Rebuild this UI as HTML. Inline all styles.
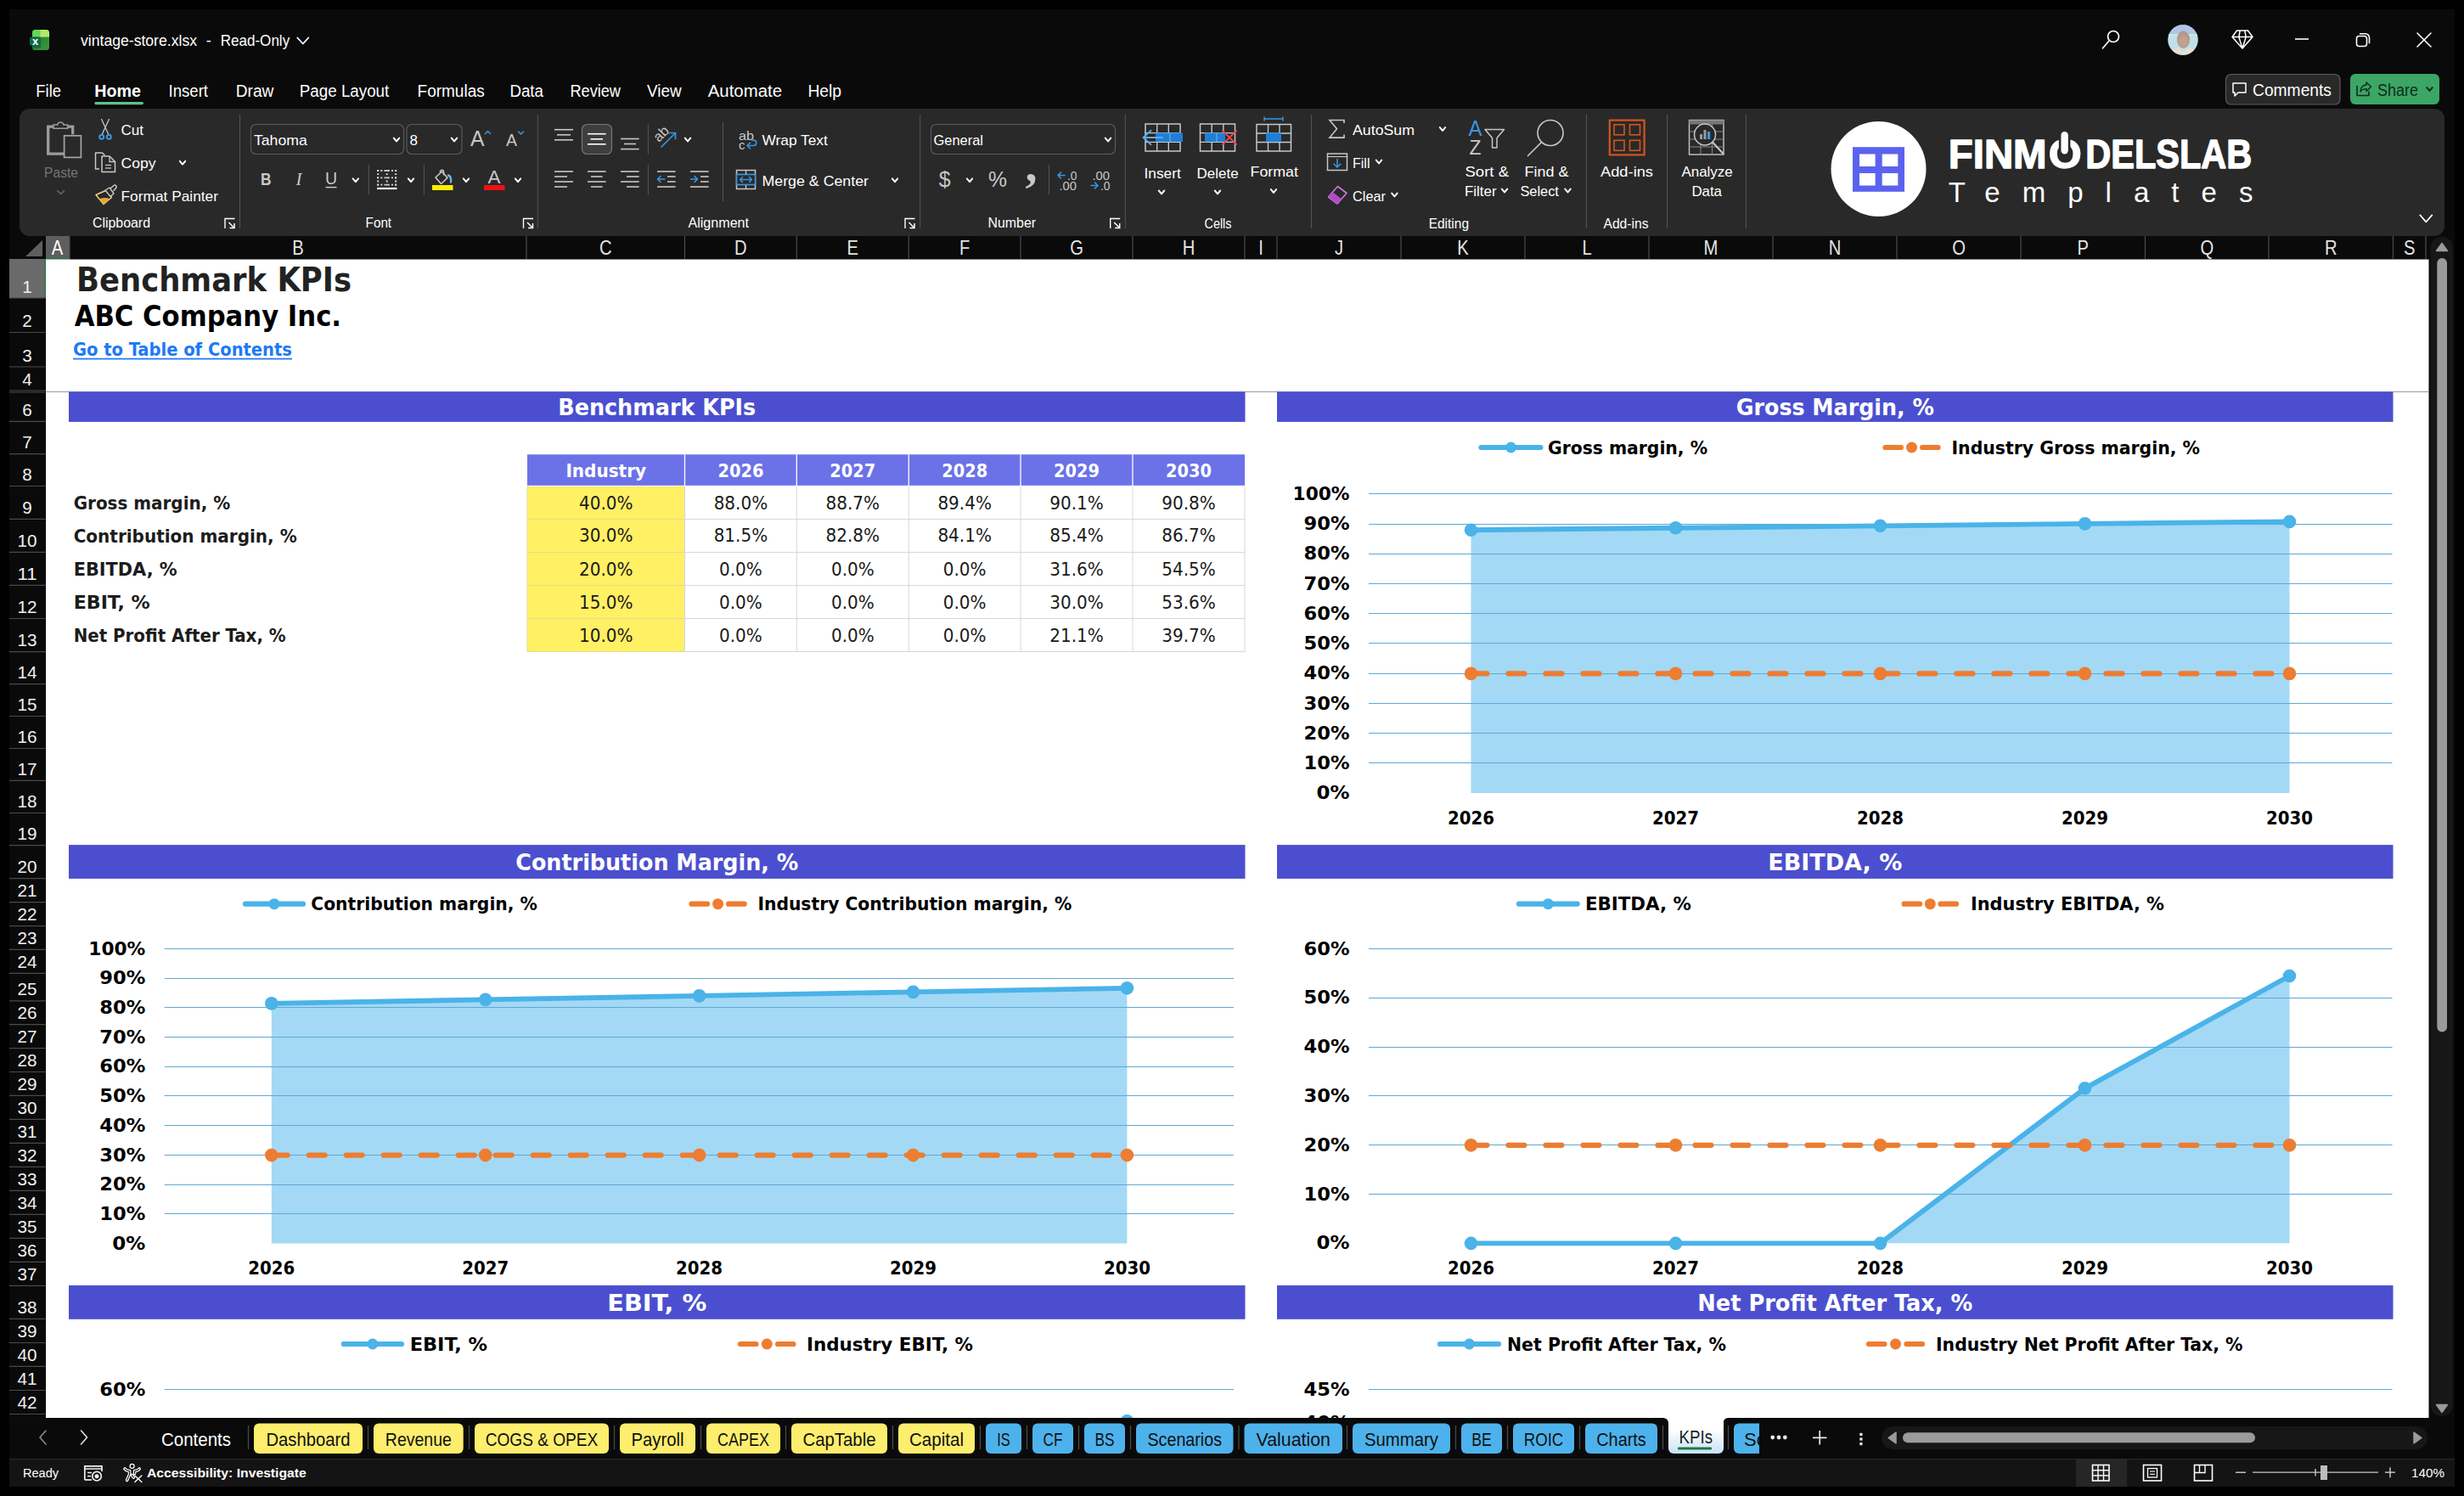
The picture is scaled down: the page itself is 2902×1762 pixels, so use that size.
<!DOCTYPE html>
<html lang="en"><head><meta charset="utf-8"><title>vintage-store.xlsx - Excel</title>
<style>
html,body{margin:0;padding:0;background:#000;}
body{width:2902px;height:1762px;overflow:hidden;}
svg{display:block;font-family:"Liberation Sans",sans-serif;}
svg text{white-space:pre;}
.sh{font-family:"DejaVu Sans Condensed","DejaVu Sans","Liberation Sans",sans-serif;}
</style></head><body>
<svg width="2902" height="1762" viewBox="0 0 2902 1762">
<rect x="0" y="0" width="2902" height="1762" fill="#000" />
<rect x="11" y="11" width="2880" height="1740" fill="#0a0a0a" />
<g id="titlebar" >
<defs><linearGradient id="xg" x1="0" y1="0" x2="1" y2="1"><stop offset="0" stop-color="#257627"/><stop offset="1" stop-color="#38993d"/></linearGradient><clipPath id="xc"><rect x="38" y="35" width="20" height="24.2" rx="3.6"/></clipPath></defs>
<g clip-path="url(#xc)">
<rect x="38" y="35" width="20" height="24.2" fill="url(#xg)" />
<rect x="38" y="35" width="9.2" height="8.6" fill="#62d75a" />
<rect x="47.2" y="35" width="10.8" height="8.6" fill="#b4e86b" />
</g>
<path d="M38 43.6 h7.5 a2.5 2.5 0 0 1 2.5 2.5 v8 a2.5 2.5 0 0 1 -2.5 2.5 h-5 l-5.5 -4 v-6.5 a2.5 2.5 0 0 1 2.5 -2.5 z" fill="#106a45" />
<text x="41.6" y="52.8" font-size="13" fill="#fff" font-weight="bold" text-anchor="middle" >x</text>
<text x="95" y="53.6" font-size="18.5" fill="#fff" textLength="137" lengthAdjust="spacingAndGlyphs" >vintage-store.xlsx</text>
<text x="242.7" y="53.6" font-size="18.5" fill="#fff" >-</text>
<text x="259.7" y="53.6" font-size="18.5" fill="#fff" textLength="81.5" lengthAdjust="spacingAndGlyphs" >Read-Only</text>
<path d="M350.3 44.5 L356.8 51.5 L363.3 44.5" fill="none" stroke="#fff" stroke-width="1.8" stroke-linecap="round" stroke-linejoin="round"/>
<circle cx="2489" cy="43" r="6.5" fill="none" stroke="#fff" stroke-width="1.7" />
<line x1="2484.3" y1="47.8" x2="2476.5" y2="56.8" stroke="#fff" stroke-width="1.7" stroke-linecap="round"/>
<circle cx="2571" cy="47" r="17.8" fill="#bfe0e6" />
<clipPath id="avc"><circle cx="2571" cy="47" r="17.8"/></clipPath>
<g clip-path="url(#avc)">
<rect x="2552" y="28" width="38" height="12.5" fill="#aec6e6" />
<rect x="2552" y="40" width="38" height="2.5" fill="#cfe3ea" />
<ellipse cx="2571.5" cy="46.5" rx="7.6" ry="10.2" fill="#b7988a"/>
<ellipse cx="2571.5" cy="49" rx="5.5" ry="6.5" fill="#c0a193"/>
<path d="M2556 66 q2 -9 10 -9.5 l5.5 5 l5.5 -5 q8 0.5 10 9.5 z" fill="#e9dfd2" />
</g>
<path d="M2634.5 36 h13 l5.5 7.5 l-12 13.5 l-12 -13.5 z M2629 43.5 h24 M2638.2 36 l-1.4 7.5 l4.2 13.5 l4.2 -13.5 l-1.4 -7.5" fill="none" stroke="#fff" stroke-width="1.5" stroke-linejoin="round"/>
<line x1="2703" y1="46" x2="2719" y2="46" stroke="#fff" stroke-width="1.6" />
<rect x="2775.5" y="42.5" width="12" height="12" fill="none" rx="3" stroke="#fff" stroke-width="1.6" />
<path d="M2779 39.8 h7 a4.5 4.5 0 0 1 4.5 4.5 v7" fill="none" stroke="#fff" stroke-width="1.6" />
<path d="M2847 39 L2863 55 M2863 39 L2847 55" fill="none" stroke="#fff" stroke-width="1.6" stroke-linecap="round"/>
</g>
<g id="menubar" >
<text x="42.3" y="113.8" font-size="20" fill="#fff" textLength="29.7" lengthAdjust="spacingAndGlyphs" >File</text>
<text x="111.3" y="113.8" font-size="20" fill="#fff" font-weight="bold" textLength="54.7" lengthAdjust="spacingAndGlyphs" >Home</text>
<text x="198.6" y="113.8" font-size="20" fill="#fff" textLength="46.4" lengthAdjust="spacingAndGlyphs" >Insert</text>
<text x="277.7" y="113.8" font-size="20" fill="#fff" textLength="44.7" lengthAdjust="spacingAndGlyphs" >Draw</text>
<text x="352.8" y="113.8" font-size="20" fill="#fff" textLength="105.5" lengthAdjust="spacingAndGlyphs" >Page Layout</text>
<text x="491.6" y="113.8" font-size="20" fill="#fff" textLength="79.1" lengthAdjust="spacingAndGlyphs" >Formulas</text>
<text x="600.4" y="113.8" font-size="20" fill="#fff" textLength="39.6" lengthAdjust="spacingAndGlyphs" >Data</text>
<text x="671.4" y="113.8" font-size="20" fill="#fff" textLength="59.6" lengthAdjust="spacingAndGlyphs" >Review</text>
<text x="762" y="113.8" font-size="20" fill="#fff" textLength="40.5" lengthAdjust="spacingAndGlyphs" >View</text>
<text x="833.7" y="113.8" font-size="20" fill="#fff" textLength="87.3" lengthAdjust="spacingAndGlyphs" >Automate</text>
<text x="951.4" y="113.8" font-size="20" fill="#fff" textLength="39.6" lengthAdjust="spacingAndGlyphs" >Help</text>
<rect x="111.3" y="120" width="57.7" height="3.2" fill="#5fc08f" rx="1.6" />
<rect x="2621.5" y="87.5" width="134.5" height="35.5" fill="#292929" rx="6" stroke="#5a5a5a" stroke-width="1.2" />
<path d="M2630 98 h15 v11 h-9 l-4 4 v-4 h-2 z" fill="none" stroke="#fff" stroke-width="1.5" stroke-linejoin="round"/>
<text x="2653" y="112.5" font-size="19.5" fill="#fff" textLength="93" lengthAdjust="spacingAndGlyphs" >Comments</text>
<rect x="2768" y="87" width="105" height="36" fill="#3ba666" rx="6" />
<path d="M2776 101.5 v11 h14 v-4.5" fill="none" stroke="#0b2e19" stroke-width="1.6" stroke-linejoin="round" stroke-linecap="round"/>
<path d="M2780 108 c0 -5.5 3.5 -8 7 -8 v-3 l5.5 5.3 l-5.5 5.3 v-3 c-3 0 -5.2 0.6 -7 3.4 z" fill="none" stroke="#0b2e19" stroke-width="1.4" stroke-linejoin="round"/>
<text x="2800" y="112.5" font-size="19.5" fill="#0b2e19" textLength="48" lengthAdjust="spacingAndGlyphs" >Share</text>
<path d="M2858.3 103.1 L2861.5 106.9 L2864.7 103.1" fill="none" stroke="#0b2e19" stroke-width="2" stroke-linecap="round" stroke-linejoin="round"/>
</g>
<g id="ribbon" >
<rect x="23" y="128" width="2856" height="150" fill="#292929" rx="12" />
<path d="M63 149.2 h-6.3 v32 h18.5" fill="none" stroke="#9c9c9c" stroke-width="3.3" stroke-linejoin="miter"/>
<path d="M79.5 149.2 h6.2 v9" fill="none" stroke="#9c9c9c" stroke-width="3.3" />
<path d="M63 151.3 v-4.3 h4.6 a3.8 3.8 0 0 1 7.4 0 h4.6 v4.3 z" fill="#292929" stroke="#9c9c9c" stroke-width="1.5" />
<rect x="75.6" y="159.8" width="19.8" height="25.6" fill="#292929" stroke="#a4a4a4" stroke-width="1.7" />
<text x="52" y="209" font-size="17" fill="#757575" textLength="40" lengthAdjust="spacingAndGlyphs" >Paste</text>
<path d="M67.6 224.5 L71.6 228.5 L75.6 224.5" fill="none" stroke="#666" stroke-width="1.6" stroke-linecap="round" stroke-linejoin="round"/>
<path d="M119.6 140.5 L127.8 158.3 M128.4 140.5 L120.2 158.3" fill="none" stroke="#c8c8c8" stroke-width="1.3" stroke-linecap="round"/>
<circle cx="119.7" cy="161.2" r="2.5" fill="none" stroke="#3a96dd" stroke-width="2" />
<circle cx="128.3" cy="161.2" r="2.5" fill="none" stroke="#3a96dd" stroke-width="2" />
<text x="142.5" y="158.5" font-size="16.5" fill="#fff" textLength="26.5" lengthAdjust="spacingAndGlyphs" >Cut</text>
<path d="M117 199 h-4.5 v-19 h8 l3 3" fill="none" stroke="#c8c8c8" stroke-width="1.5" stroke-linejoin="round"/>
<path d="M120 184 h9 l6.5 6.5 v12 h-15.5 z" fill="none" stroke="#c8c8c8" stroke-width="1.5" stroke-linejoin="round"/>
<path d="M129 184 v6.5 h6.5" fill="none" stroke="#c8c8c8" stroke-width="1.3" />
<line x1="124" y1="194.5" x2="131" y2="194.5" stroke="#c8c8c8" stroke-width="1.3" />
<line x1="124" y1="198" x2="131" y2="198" stroke="#c8c8c8" stroke-width="1.3" />
<text x="142.5" y="198" font-size="16.5" fill="#fff" textLength="41" lengthAdjust="spacingAndGlyphs" >Copy</text>
<path d="M211.8 189.8 L215 193.6 L218.2 189.8" fill="none" stroke="#fff" stroke-width="2" stroke-linecap="round" stroke-linejoin="round"/>
<path d="M113 229.5 l12.5 -5.5 l6 8.5 l-9.5 8 z" fill="#292929" stroke="#f3d58d" stroke-width="1.4" stroke-linejoin="round"/>
<path d="M117.3 234.3 q6 -2.5 12.2 0 l-7.3 6 z" fill="#eda52c" />
<path d="M124 224 l5 -3 l5 7 l-4 3.5 z" fill="#292929" stroke="#c8c8c8" stroke-width="1.4" stroke-linejoin="round"/>
<path d="M130 222 l4 -3.5 a2 2 0 0 1 3 2.5 l-3.5 4" fill="none" stroke="#c8c8c8" stroke-width="1.5" />
<text x="142.5" y="236.5" font-size="16.5" fill="#fff" textLength="114.5" lengthAdjust="spacingAndGlyphs" >Format Painter</text>
<text x="109" y="268.4" font-size="16" fill="#fff" textLength="68" lengthAdjust="spacingAndGlyphs" >Clipboard</text>
<path d="M265 269.0 V257.5 H276.5" fill="none" stroke="#fff" stroke-width="1.4" />
<path d="M269.5 262.0 L276 268.5 M276 263.0 V268.5 H270.5" fill="none" stroke="#fff" stroke-width="1.5" />
<line x1="282.5" y1="135" x2="282.5" y2="269" stroke="#555" stroke-width="1" />
<rect x="295.5" y="146.5" width="180" height="35" fill="#292929" rx="6" stroke="#5a5a5a" stroke-width="1.2" />
<text x="299" y="171" font-size="17" fill="#fff" textLength="62.7" lengthAdjust="spacingAndGlyphs" >Tahoma</text>
<path d="M463.8 162.6 L467 166.4 L470.2 162.6" fill="none" stroke="#fff" stroke-width="2" stroke-linecap="round" stroke-linejoin="round"/>
<rect x="479" y="146.5" width="65" height="35" fill="#292929" rx="6" stroke="#5a5a5a" stroke-width="1.2" />
<text x="482.5" y="171" font-size="17" fill="#fff" >8</text>
<path d="M531.8 162.6 L535 166.4 L538.2 162.6" fill="none" stroke="#fff" stroke-width="2" stroke-linecap="round" stroke-linejoin="round"/>
<text x="554" y="171.5" font-size="26" fill="#c8c8c8" textLength="16.5" lengthAdjust="spacingAndGlyphs" >A</text>
<path d="M571.5 157.5 l3 -3 l3 3" fill="none" stroke="#3a96dd" stroke-width="1.6" stroke-linecap="round" stroke-linejoin="round"/>
<text x="596" y="171.5" font-size="21" fill="#c8c8c8" textLength="13" lengthAdjust="spacingAndGlyphs" >A</text>
<path d="M610.5 155 l3 3 l3 -3" fill="none" stroke="#3a96dd" stroke-width="1.6" stroke-linecap="round" stroke-linejoin="round"/>
<text x="313.3" y="218" font-size="21" fill="#c8c8c8" font-weight="bold" text-anchor="middle" textLength="12.5" lengthAdjust="spacingAndGlyphs" >B</text>
<text x="352" y="218" font-size="21" fill="#c8c8c8" text-anchor="middle" font-style="italic" font-family="Liberation Serif, serif">I</text>
<text x="390" y="216.5" font-size="19.5" fill="#c8c8c8" text-anchor="middle" >U</text>
<line x1="383.5" y1="220.6" x2="396.5" y2="220.6" stroke="#c8c8c8" stroke-width="1.5" />
<path d="M415.6 210.4 L418.8 214.2 L422 210.4" fill="none" stroke="#fff" stroke-width="2" stroke-linecap="round" stroke-linejoin="round"/>
<line x1="434.4" y1="194" x2="434.4" y2="229.5" stroke="#555" stroke-width="1" />
<line x1="444.2" y1="201" x2="467.2" y2="201" stroke="#e4e4e4" stroke-width="1.9" stroke-dasharray="1.9 2.3"/>
<line x1="444.2" y1="209.4" x2="467.2" y2="209.4" stroke="#e4e4e4" stroke-width="1.9" stroke-dasharray="1.9 2.3"/>
<line x1="444.2" y1="217.6" x2="467.2" y2="217.6" stroke="#e4e4e4" stroke-width="1.9" stroke-dasharray="1.9 2.3"/>
<line x1="445.2" y1="200" x2="445.2" y2="218.6" stroke="#e4e4e4" stroke-width="1.9" stroke-dasharray="1.9 2.3"/>
<line x1="455.7" y1="200" x2="455.7" y2="218.6" stroke="#e4e4e4" stroke-width="1.9" stroke-dasharray="1.9 2.3"/>
<line x1="466.2" y1="200" x2="466.2" y2="218.6" stroke="#e4e4e4" stroke-width="1.9" stroke-dasharray="1.9 2.3"/>
<line x1="444" y1="222" x2="467.5" y2="222" stroke="#fff" stroke-width="2.2" />
<path d="M480.8 210.4 L484 214.2 L487.2 210.4" fill="none" stroke="#fff" stroke-width="2" stroke-linecap="round" stroke-linejoin="round"/>
<line x1="499.4" y1="194" x2="499.4" y2="229.5" stroke="#555" stroke-width="1" />
<path d="M513 209 l7.5 -7 l6.5 7.5 l-7.5 7 z" fill="none" stroke="#c8c8c8" stroke-width="1.6" stroke-linejoin="round"/>
<path d="M518.5 203.8 v-2.6 l2.2 -1.2 l1.8 1.2 v5" fill="none" stroke="#c8c8c8" stroke-width="1.4" stroke-linejoin="round"/>
<path d="M528 206.5 c2.6 0.8 3.4 4 3 8" fill="none" stroke="#6db3ee" stroke-width="2.4" stroke-linecap="round"/>
<rect x="509" y="218" width="24.5" height="6" fill="#ffee00" />
<path d="M545.8 210.4 L549 214.2 L552.2 210.4" fill="none" stroke="#fff" stroke-width="2" stroke-linecap="round" stroke-linejoin="round"/>
<text x="582" y="216" font-size="22" fill="#c8c8c8" text-anchor="middle" textLength="15" lengthAdjust="spacingAndGlyphs" >A</text>
<rect x="570" y="218" width="24.5" height="6" fill="#ee1111" />
<path d="M606.8 210.4 L610 214.2 L613.2 210.4" fill="none" stroke="#fff" stroke-width="2" stroke-linecap="round" stroke-linejoin="round"/>
<text x="430.6" y="268.4" font-size="16" fill="#fff" textLength="30.5" lengthAdjust="spacingAndGlyphs" >Font</text>
<path d="M616.5 269.0 V257.5 H628.0" fill="none" stroke="#fff" stroke-width="1.4" />
<path d="M621.0 262.0 L627.5 268.5 M627.5 263.0 V268.5 H622.0" fill="none" stroke="#fff" stroke-width="1.5" />
<line x1="633.3" y1="135" x2="633.3" y2="269" stroke="#555" stroke-width="1" />
<line x1="653" y1="152.7" x2="675" y2="152.7" stroke="#c8c8c8" stroke-width="1.6" />
<line x1="653" y1="164.8" x2="675" y2="164.8" stroke="#c8c8c8" stroke-width="1.6" />
<line x1="656" y1="158.8" x2="672" y2="158.8" stroke="#c8c8c8" stroke-width="1.6" />
<rect x="685.5" y="146.5" width="35" height="35" fill="#3e3e3e" rx="6" stroke="#787878" stroke-width="1.2" />
<line x1="692" y1="157.7" x2="713.6" y2="157.7" stroke="#fff" stroke-width="1.6" />
<line x1="692" y1="169.8" x2="713.6" y2="169.8" stroke="#fff" stroke-width="1.6" />
<line x1="695.5" y1="163.8" x2="710" y2="163.8" stroke="#fff" stroke-width="1.6" />
<line x1="731" y1="163.5" x2="752.6" y2="163.5" stroke="#c8c8c8" stroke-width="1.6" />
<line x1="731" y1="175.6" x2="752.6" y2="175.6" stroke="#c8c8c8" stroke-width="1.6" />
<line x1="735" y1="169.5" x2="749" y2="169.5" stroke="#c8c8c8" stroke-width="1.6" />
<line x1="763.4" y1="146" x2="763.4" y2="181.6" stroke="#555" stroke-width="1" />
<text x="0" y="0" font-size="16.5" fill="#c8c8c8" transform="translate(776,168) rotate(-45)">ab</text>
<path d="M779 173 L795 157 M788.5 156.5 h7 v7" fill="none" stroke="#3a96dd" stroke-width="1.7" stroke-linecap="round" stroke-linejoin="round"/>
<path d="M806.8 162.6 L810 166.4 L813.2 162.6" fill="none" stroke="#fff" stroke-width="2" stroke-linecap="round" stroke-linejoin="round"/>
<line x1="851.5" y1="144" x2="851.5" y2="237" stroke="#555" stroke-width="1" />
<text x="870" y="164.5" font-size="15" fill="#c8c8c8" textLength="18" lengthAdjust="spacingAndGlyphs" >ab</text>
<text x="870" y="176" font-size="15" fill="#c8c8c8" >c</text>
<path d="M880 171.5 h7.5 a3.2 3.2 0 0 0 0 -6.4 h-1.5 M883.5 168 l-3.5 3.5 l3.5 3.5" fill="none" stroke="#3a96dd" stroke-width="1.6" stroke-linecap="round" stroke-linejoin="round"/>
<text x="897.5" y="171" font-size="17" fill="#fff" textLength="77.3" lengthAdjust="spacingAndGlyphs" >Wrap Text</text>
<line x1="653" y1="202" x2="675" y2="202" stroke="#c8c8c8" stroke-width="1.6" />
<line x1="653" y1="214" x2="675" y2="214" stroke="#c8c8c8" stroke-width="1.6" />
<line x1="653" y1="208" x2="668" y2="208" stroke="#c8c8c8" stroke-width="1.6" />
<line x1="653" y1="220" x2="668" y2="220" stroke="#c8c8c8" stroke-width="1.6" />
<line x1="692" y1="202" x2="713.6" y2="202" stroke="#c8c8c8" stroke-width="1.6" />
<line x1="692" y1="214" x2="713.6" y2="214" stroke="#c8c8c8" stroke-width="1.6" />
<line x1="696" y1="208" x2="709.6" y2="208" stroke="#c8c8c8" stroke-width="1.6" />
<line x1="696" y1="220" x2="709.6" y2="220" stroke="#c8c8c8" stroke-width="1.6" />
<line x1="731" y1="202" x2="752.6" y2="202" stroke="#c8c8c8" stroke-width="1.6" />
<line x1="731" y1="214" x2="752.6" y2="214" stroke="#c8c8c8" stroke-width="1.6" />
<line x1="738" y1="208" x2="752.6" y2="208" stroke="#c8c8c8" stroke-width="1.6" />
<line x1="738" y1="220" x2="752.6" y2="220" stroke="#c8c8c8" stroke-width="1.6" />
<line x1="763.4" y1="194" x2="763.4" y2="229.5" stroke="#555" stroke-width="1" />
<line x1="774" y1="202" x2="795.6" y2="202" stroke="#c8c8c8" stroke-width="1.6" />
<line x1="774" y1="220" x2="795.6" y2="220" stroke="#c8c8c8" stroke-width="1.6" />
<line x1="786" y1="208" x2="795.6" y2="208" stroke="#c8c8c8" stroke-width="1.6" />
<line x1="786" y1="214" x2="795.6" y2="214" stroke="#c8c8c8" stroke-width="1.6" />
<path d="M783 211 h-8 M778 207.5 l-3.5 3.5 l3.5 3.5" fill="none" stroke="#3a96dd" stroke-width="1.6" stroke-linecap="round" stroke-linejoin="round"/>
<line x1="813" y1="202" x2="834.6" y2="202" stroke="#c8c8c8" stroke-width="1.6" />
<line x1="813" y1="220" x2="834.6" y2="220" stroke="#c8c8c8" stroke-width="1.6" />
<line x1="825" y1="208" x2="834.6" y2="208" stroke="#c8c8c8" stroke-width="1.6" />
<line x1="825" y1="214" x2="834.6" y2="214" stroke="#c8c8c8" stroke-width="1.6" />
<path d="M813.5 211 h8 M818 207.5 l3.5 3.5 l-3.5 3.5" fill="none" stroke="#3a96dd" stroke-width="1.6" stroke-linecap="round" stroke-linejoin="round"/>
<rect x="867.5" y="200.5" width="22" height="22" fill="none" stroke="#c8c8c8" stroke-width="1.5" />
<rect x="867.5" y="205.5" width="22" height="12" fill="#292929" stroke="#3a96dd" stroke-width="1.7" />
<line x1="878.5" y1="200.5" x2="878.5" y2="205" stroke="#c8c8c8" stroke-width="1.4" />
<line x1="878.5" y1="218" x2="878.5" y2="222.5" stroke="#c8c8c8" stroke-width="1.4" />
<path d="M871.5 211.5 h14 M874.5 208.5 l-3 3 l3 3 M882.5 208.5 l3 3 l-3 3" fill="none" stroke="#3a96dd" stroke-width="1.5" stroke-linecap="round" stroke-linejoin="round"/>
<text x="897.5" y="218.6" font-size="17" fill="#fff" textLength="125.5" lengthAdjust="spacingAndGlyphs" >Merge &amp; Center</text>
<path d="M1050.8 210.4 L1054 214.2 L1057.2 210.4" fill="none" stroke="#fff" stroke-width="2" stroke-linecap="round" stroke-linejoin="round"/>
<text x="810.5" y="268.4" font-size="16" fill="#fff" textLength="71.5" lengthAdjust="spacingAndGlyphs" >Alignment</text>
<path d="M1066 269.0 V257.5 H1077.5" fill="none" stroke="#fff" stroke-width="1.4" />
<path d="M1070.5 262.0 L1077 268.5 M1077 263.0 V268.5 H1071.5" fill="none" stroke="#fff" stroke-width="1.5" />
<line x1="1083.7" y1="135" x2="1083.7" y2="269" stroke="#555" stroke-width="1" />
<rect x="1096.5" y="146.5" width="217" height="35" fill="#292929" rx="6" stroke="#5a5a5a" stroke-width="1.2" />
<text x="1099.5" y="171" font-size="17" fill="#fff" textLength="58.5" lengthAdjust="spacingAndGlyphs" >General</text>
<path d="M1301.8 162.6 L1305 166.4 L1308.2 162.6" fill="none" stroke="#fff" stroke-width="2" stroke-linecap="round" stroke-linejoin="round"/>
<text x="1112.7" y="220" font-size="25" fill="#c8c8c8" text-anchor="middle" >$</text>
<path d="M1138.8 210.4 L1142 214.2 L1145.2 210.4" fill="none" stroke="#fff" stroke-width="2" stroke-linecap="round" stroke-linejoin="round"/>
<text x="1175" y="220" font-size="25" fill="#c8c8c8" text-anchor="middle" textLength="22" lengthAdjust="spacingAndGlyphs" >%</text>
<text x="1214.6" y="212.5" font-size="56" fill="#c8c8c8" font-weight="bold" text-anchor="middle" font-family="Liberation Serif, serif">,</text>
<line x1="1235.5" y1="194" x2="1235.5" y2="229.5" stroke="#555" stroke-width="1" />
<text x="1257" y="211.5" font-size="14.5" fill="#c8c8c8" textLength="11.5" lengthAdjust="spacingAndGlyphs" >.0</text>
<text x="1247.5" y="223.5" font-size="14.5" fill="#c8c8c8" textLength="20.5" lengthAdjust="spacingAndGlyphs" >.00</text>
<path d="M1254 206.5 h-8 M1249.5 203 l-3.5 3.5 l3.5 3.5" fill="none" stroke="#3a96dd" stroke-width="1.6" stroke-linecap="round" stroke-linejoin="round"/>
<text x="1286.5" y="211.5" font-size="14.5" fill="#c8c8c8" textLength="20.5" lengthAdjust="spacingAndGlyphs" >.00</text>
<text x="1296" y="223.5" font-size="14.5" fill="#c8c8c8" textLength="11.5" lengthAdjust="spacingAndGlyphs" >.0</text>
<path d="M1285 218.5 h8 M1289.5 215 l3.5 3.5 l-3.5 3.5" fill="none" stroke="#3a96dd" stroke-width="1.6" stroke-linecap="round" stroke-linejoin="round"/>
<text x="1163.5" y="268.4" font-size="16" fill="#fff" textLength="56.5" lengthAdjust="spacingAndGlyphs" >Number</text>
<path d="M1307.7 269.0 V257.5 H1319.2" fill="none" stroke="#fff" stroke-width="1.4" />
<path d="M1312.2 262.0 L1318.7 268.5 M1318.7 263.0 V268.5 H1313.2" fill="none" stroke="#fff" stroke-width="1.5" />
<line x1="1325.3" y1="135" x2="1325.3" y2="269" stroke="#555" stroke-width="1" />
<rect x="1349" y="146" width="41" height="32" fill="none" stroke="#c8c8c8" stroke-width="1.5" />
<line x1="1362.67" y1="146" x2="1362.67" y2="178" stroke="#c8c8c8" stroke-width="1.4" />
<line x1="1376.33" y1="146" x2="1376.33" y2="178" stroke="#c8c8c8" stroke-width="1.4" />
<line x1="1349" y1="156.667" x2="1390" y2="156.667" stroke="#c8c8c8" stroke-width="1.4" />
<line x1="1349" y1="167.333" x2="1390" y2="167.333" stroke="#c8c8c8" stroke-width="1.4" />
<rect x="1361" y="156.5" width="32" height="10.5" fill="#1f7fd6" />
<line x1="1378" y1="156.5" x2="1378" y2="167" stroke="#62aef0" stroke-width="1.2" />
<path d="M1369 162 h-22.5 M1355.5 153.8 l-9 8.2 l9 8.2" fill="none" stroke="#5fa9e6" stroke-width="1.9" stroke-linecap="round" stroke-linejoin="round"/>
<text x="1347.5" y="209.8" font-size="17" fill="#fff" textLength="43.3" lengthAdjust="spacingAndGlyphs" >Insert</text>
<path d="M1364.8 224.5 L1368 228.3 L1371.2 224.5" fill="none" stroke="#fff" stroke-width="2" stroke-linecap="round" stroke-linejoin="round"/>
<rect x="1413.5" y="146" width="41" height="32" fill="none" stroke="#c8c8c8" stroke-width="1.5" />
<line x1="1427.17" y1="146" x2="1427.17" y2="178" stroke="#c8c8c8" stroke-width="1.4" />
<line x1="1440.83" y1="146" x2="1440.83" y2="178" stroke="#c8c8c8" stroke-width="1.4" />
<line x1="1413.5" y1="156.667" x2="1454.5" y2="156.667" stroke="#c8c8c8" stroke-width="1.4" />
<line x1="1413.5" y1="167.333" x2="1454.5" y2="167.333" stroke="#c8c8c8" stroke-width="1.4" />
<rect x="1419" y="156.5" width="24" height="10.5" fill="#1f7fd6" />
<line x1="1433" y1="156.5" x2="1433" y2="167" stroke="#62aef0" stroke-width="1.2" />
<path d="M1440 154 l16 16 M1456 154 l-16 16" fill="none" stroke="#e5484d" stroke-width="1.9" stroke-linecap="round"/>
<text x="1409.6" y="209.8" font-size="17" fill="#fff" textLength="49" lengthAdjust="spacingAndGlyphs" >Delete</text>
<path d="M1430.8 224.5 L1434 228.3 L1437.2 224.5" fill="none" stroke="#fff" stroke-width="2" stroke-linecap="round" stroke-linejoin="round"/>
<rect x="1480" y="146.5" width="40.5" height="31.5" fill="none" stroke="#c8c8c8" stroke-width="1.5" />
<line x1="1493.5" y1="146.5" x2="1493.5" y2="178" stroke="#c8c8c8" stroke-width="1.4" />
<line x1="1507" y1="146.5" x2="1507" y2="178" stroke="#c8c8c8" stroke-width="1.4" />
<line x1="1480" y1="157" x2="1520.5" y2="157" stroke="#c8c8c8" stroke-width="1.4" />
<line x1="1480" y1="167.5" x2="1520.5" y2="167.5" stroke="#c8c8c8" stroke-width="1.4" />
<rect x="1491" y="156.5" width="18" height="10.5" fill="#1f7fd6" />
<path d="M1489 140 h22 M1489 137.5 v5 M1511 137.5 v5" fill="none" stroke="#3a96dd" stroke-width="1.5" />
<text x="1472.5" y="207.5" font-size="17" fill="#fff" textLength="56.5" lengthAdjust="spacingAndGlyphs" >Format</text>
<path d="M1496.8 223.1 L1500 226.9 L1503.2 223.1" fill="none" stroke="#fff" stroke-width="2" stroke-linecap="round" stroke-linejoin="round"/>
<text x="1418.5" y="269" font-size="16" fill="#fff" textLength="32" lengthAdjust="spacingAndGlyphs" >Cells</text>
<line x1="1544.4" y1="135" x2="1544.4" y2="269" stroke="#555" stroke-width="1" />
<path d="M1583 145 v-3.5 h-17 l8.5 10.3 l-8.5 10.3 h17 v-3.5" fill="none" stroke="#c8c8c8" stroke-width="1.6" stroke-linejoin="miter"/>
<text x="1593" y="158.5" font-size="17" fill="#fff" textLength="73" lengthAdjust="spacingAndGlyphs" >AutoSum</text>
<path d="M1695.8 150.1 L1699 153.9 L1702.2 150.1" fill="none" stroke="#fff" stroke-width="2" stroke-linecap="round" stroke-linejoin="round"/>
<rect x="1563.5" y="181" width="23" height="19.5" fill="none" stroke="#c8c8c8" stroke-width="1.5" />
<line x1="1563.5" y1="184.5" x2="1586.5" y2="184.5" stroke="#c8c8c8" stroke-width="1.2" />
<path d="M1575 187.5 v9 M1571 193 l4 4 l4 -4" fill="none" stroke="#3a96dd" stroke-width="1.6" stroke-linecap="round" stroke-linejoin="round"/>
<text x="1593" y="197.5" font-size="17" fill="#fff" textLength="20.5" lengthAdjust="spacingAndGlyphs" >Fill</text>
<path d="M1620.8 188.6 L1624 192.4 L1627.2 188.6" fill="none" stroke="#fff" stroke-width="2" stroke-linecap="round" stroke-linejoin="round"/>
<path d="M1564.5 232 l11 -12.5 l10.5 8 l-11 12.5 z" fill="none" stroke="#c77dd8" stroke-width="1.6" stroke-linejoin="round"/>
<path d="M1564.5 232 l5 -5.7 l10.5 8 l-5 5.7 z" fill="#b04cc8" />
<text x="1593" y="236.5" font-size="17" fill="#fff" textLength="39" lengthAdjust="spacingAndGlyphs" >Clear</text>
<path d="M1639.2 227.6 L1642.4 231.4 L1645.6 227.6" fill="none" stroke="#fff" stroke-width="2" stroke-linecap="round" stroke-linejoin="round"/>
<text x="1729.5" y="160" font-size="25" fill="#3a96dd" textLength="16" lengthAdjust="spacingAndGlyphs" >A</text>
<text x="1730.5" y="181.5" font-size="24" fill="#c8c8c8" textLength="14" lengthAdjust="spacingAndGlyphs" >Z</text>
<path d="M1749 152.5 h22.5 l-8.5 10 v11.5 h-5.5 v-11.5 z" fill="none" stroke="#c8c8c8" stroke-width="1.5" stroke-linejoin="round"/>
<text x="1725.5" y="207.5" font-size="17" fill="#fff" textLength="51.5" lengthAdjust="spacingAndGlyphs" >Sort &amp;</text>
<text x="1725" y="231.4" font-size="17" fill="#fff" textLength="37.5" lengthAdjust="spacingAndGlyphs" >Filter</text>
<path d="M1768.8 222.6 L1772 226.4 L1775.2 222.6" fill="none" stroke="#fff" stroke-width="2" stroke-linecap="round" stroke-linejoin="round"/>
<circle cx="1826" cy="156.5" r="15" fill="none" stroke="#c8c8c8" stroke-width="1.6" />
<line x1="1815.5" y1="167.5" x2="1799.5" y2="183.5" stroke="#c8c8c8" stroke-width="1.7" stroke-linecap="round"/>
<text x="1795.4" y="207.5" font-size="17" fill="#fff" textLength="52" lengthAdjust="spacingAndGlyphs" >Find &amp;</text>
<text x="1790.4" y="231.4" font-size="17" fill="#fff" textLength="45.5" lengthAdjust="spacingAndGlyphs" >Select</text>
<path d="M1843.3 222.6 L1846.5 226.4 L1849.7 222.6" fill="none" stroke="#fff" stroke-width="2" stroke-linecap="round" stroke-linejoin="round"/>
<text x="1682.7" y="269" font-size="16" fill="#fff" textLength="47.3" lengthAdjust="spacingAndGlyphs" >Editing</text>
<line x1="1868.4" y1="135" x2="1868.4" y2="269" stroke="#555" stroke-width="1" />
<rect x="1895.8" y="141.6" width="40.8" height="40.8" fill="none" stroke="#d4551f" stroke-width="2.2" />
<rect x="1901" y="146.8" width="12" height="12" fill="none" stroke="#d4551f" stroke-width="1.6" />
<rect x="1919.5" y="146.8" width="12" height="12" fill="none" stroke="#d4551f" stroke-width="1.6" />
<rect x="1901" y="165.3" width="12" height="12" fill="none" stroke="#d4551f" stroke-width="1.6" />
<rect x="1919.5" y="165.3" width="12" height="12" fill="none" stroke="#d4551f" stroke-width="1.6" />
<text x="1885" y="207.5" font-size="17" fill="#fff" textLength="62" lengthAdjust="spacingAndGlyphs" >Add-ins</text>
<text x="1888.5" y="269" font-size="16" fill="#fff" textLength="53" lengthAdjust="spacingAndGlyphs" >Add-ins</text>
<line x1="1963.5" y1="135" x2="1963.5" y2="269" stroke="#555" stroke-width="1" />
<rect x="1989.5" y="141.5" width="40.5" height="40.5" fill="none" stroke="#c8c8c8" stroke-width="1.4" />
<rect x="1989.5" y="141.5" width="40.5" height="5" fill="#777" />
<line x1="1989.5" y1="155" x2="2030" y2="155" stroke="#888" stroke-width="1.1" />
<line x1="1989.5" y1="164" x2="2030" y2="164" stroke="#888" stroke-width="1.1" />
<line x1="1989.5" y1="173" x2="2030" y2="173" stroke="#888" stroke-width="1.1" />
<line x1="2003" y1="146" x2="2003" y2="182" stroke="#888" stroke-width="1.1" />
<line x1="2016.5" y1="146" x2="2016.5" y2="182" stroke="#888" stroke-width="1.1" />
<circle cx="2008" cy="158.5" r="12.5" fill="#292929" stroke="#c8c8c8" stroke-width="1.5" />
<rect x="2002" y="158" width="3" height="6" fill="#999" />
<rect x="2006.5" y="153" width="3" height="11" fill="#999" />
<rect x="2011" y="155" width="3.2" height="9" fill="#3a96dd" />
<line x1="2017" y1="167.5" x2="2029.5" y2="181" stroke="#c8c8c8" stroke-width="2" stroke-linecap="round"/>
<text x="1980.4" y="207.5" font-size="17" fill="#fff" textLength="60.4" lengthAdjust="spacingAndGlyphs" >Analyze</text>
<text x="1992.4" y="231.4" font-size="17" fill="#fff" textLength="35.6" lengthAdjust="spacingAndGlyphs" >Data</text>
<line x1="2056.4" y1="135" x2="2056.4" y2="269" stroke="#555" stroke-width="1" />
<circle cx="2212.5" cy="199" r="56" fill="#fff" />
<rect x="2182" y="173.2" width="61" height="52.6" fill="#5b63ee" />
<rect x="2190" y="181.5" width="18.6" height="14.5" fill="#fff" />
<rect x="2216.7" y="181.5" width="18.6" height="14.5" fill="#fff" />
<rect x="2190" y="204" width="18.6" height="14.5" fill="#fff" />
<rect x="2216.7" y="204" width="18.6" height="14.5" fill="#fff" />
<text y="197.8" font-size="48" font-weight="bold" fill="#fff" stroke="#fff" stroke-width="1.4" stroke-linejoin="round"><tspan x="2294.8" textLength="115.8" lengthAdjust="spacingAndGlyphs">FINM</tspan><tspan x="2412.8" textLength="39" lengthAdjust="spacingAndGlyphs">O</tspan><tspan x="2456.3" textLength="196" lengthAdjust="spacingAndGlyphs">DELSLAB</tspan></text>
<rect x="2424.8" y="150" width="13.6" height="32" fill="#292929" rx="6.8" />
<rect x="2427.4" y="155" width="8.4" height="26.5" fill="#fff" rx="4.2" />
<text x="2294.8" y="237.9" font-size="33" fill="#fff" textLength="358.6" lengthAdjust="spacing" >Templates</text>
<path d="M2850.3 253.4 L2857.3 261.4 L2864.3 253.4" fill="none" stroke="#fff" stroke-width="1.7" stroke-linecap="round" stroke-linejoin="round"/>
</g>
<g id="headers" >
<rect x="11" y="278" width="2849" height="27" fill="#0a0a0a" />
<path d="M50 283 V302 H30 Z" fill="#5f5f5f" />
<rect x="54" y="278" width="28" height="27" fill="#5e5e5e" />
<line x1="54" y1="305.2" x2="82" y2="305.2" stroke="#1e7a45" stroke-width="1.6" />
<line x1="82" y1="278" x2="82" y2="305" stroke="#4c4c4c" stroke-width="1.2" />
<text transform="translate(67.5,300.3) scale(0.86,1)" font-size="23.5" text-anchor="middle" fill="#fff">A</text>
<line x1="620" y1="278" x2="620" y2="305" stroke="#4c4c4c" stroke-width="1.2" />
<text transform="translate(351,300.3) scale(0.86,1)" font-size="23.5" text-anchor="middle" fill="#e4e4e4">B</text>
<line x1="806.5" y1="278" x2="806.5" y2="305" stroke="#4c4c4c" stroke-width="1.2" />
<text transform="translate(713.25,300.3) scale(0.86,1)" font-size="23.5" text-anchor="middle" fill="#e4e4e4">C</text>
<line x1="938.3" y1="278" x2="938.3" y2="305" stroke="#4c4c4c" stroke-width="1.2" />
<text transform="translate(872.4,300.3) scale(0.86,1)" font-size="23.5" text-anchor="middle" fill="#e4e4e4">D</text>
<line x1="1070.3" y1="278" x2="1070.3" y2="305" stroke="#4c4c4c" stroke-width="1.2" />
<text transform="translate(1004.3,300.3) scale(0.86,1)" font-size="23.5" text-anchor="middle" fill="#e4e4e4">E</text>
<line x1="1202" y1="278" x2="1202" y2="305" stroke="#4c4c4c" stroke-width="1.2" />
<text transform="translate(1136.15,300.3) scale(0.86,1)" font-size="23.5" text-anchor="middle" fill="#e4e4e4">F</text>
<line x1="1334" y1="278" x2="1334" y2="305" stroke="#4c4c4c" stroke-width="1.2" />
<text transform="translate(1268,300.3) scale(0.86,1)" font-size="23.5" text-anchor="middle" fill="#e4e4e4">G</text>
<line x1="1466" y1="278" x2="1466" y2="305" stroke="#4c4c4c" stroke-width="1.2" />
<text transform="translate(1400,300.3) scale(0.86,1)" font-size="23.5" text-anchor="middle" fill="#e4e4e4">H</text>
<line x1="1504" y1="278" x2="1504" y2="305" stroke="#4c4c4c" stroke-width="1.2" />
<text transform="translate(1485,300.3) scale(0.86,1)" font-size="23.5" text-anchor="middle" fill="#e4e4e4">I</text>
<line x1="1650" y1="278" x2="1650" y2="305" stroke="#4c4c4c" stroke-width="1.2" />
<text transform="translate(1577,300.3) scale(0.86,1)" font-size="23.5" text-anchor="middle" fill="#e4e4e4">J</text>
<line x1="1796" y1="278" x2="1796" y2="305" stroke="#4c4c4c" stroke-width="1.2" />
<text transform="translate(1723,300.3) scale(0.86,1)" font-size="23.5" text-anchor="middle" fill="#e4e4e4">K</text>
<line x1="1942" y1="278" x2="1942" y2="305" stroke="#4c4c4c" stroke-width="1.2" />
<text transform="translate(1869,300.3) scale(0.86,1)" font-size="23.5" text-anchor="middle" fill="#e4e4e4">L</text>
<line x1="2088" y1="278" x2="2088" y2="305" stroke="#4c4c4c" stroke-width="1.2" />
<text transform="translate(2015,300.3) scale(0.86,1)" font-size="23.5" text-anchor="middle" fill="#e4e4e4">M</text>
<line x1="2234" y1="278" x2="2234" y2="305" stroke="#4c4c4c" stroke-width="1.2" />
<text transform="translate(2161,300.3) scale(0.86,1)" font-size="23.5" text-anchor="middle" fill="#e4e4e4">N</text>
<line x1="2380" y1="278" x2="2380" y2="305" stroke="#4c4c4c" stroke-width="1.2" />
<text transform="translate(2307,300.3) scale(0.86,1)" font-size="23.5" text-anchor="middle" fill="#e4e4e4">O</text>
<line x1="2526.5" y1="278" x2="2526.5" y2="305" stroke="#4c4c4c" stroke-width="1.2" />
<text transform="translate(2453.25,300.3) scale(0.86,1)" font-size="23.5" text-anchor="middle" fill="#e4e4e4">P</text>
<line x1="2672" y1="278" x2="2672" y2="305" stroke="#4c4c4c" stroke-width="1.2" />
<text transform="translate(2599.25,300.3) scale(0.86,1)" font-size="23.5" text-anchor="middle" fill="#e4e4e4">Q</text>
<line x1="2818.5" y1="278" x2="2818.5" y2="305" stroke="#4c4c4c" stroke-width="1.2" />
<text transform="translate(2745.25,300.3) scale(0.86,1)" font-size="23.5" text-anchor="middle" fill="#e4e4e4">R</text>
<line x1="2857" y1="278" x2="2857" y2="305" stroke="#4c4c4c" stroke-width="1.2" />
<text transform="translate(2837.75,300.3) scale(0.86,1)" font-size="23.5" text-anchor="middle" fill="#e4e4e4">S</text>
<rect x="11" y="305" width="42.5" height="1365" fill="#0a0a0a" />
<rect x="11" y="305" width="42.5" height="46" fill="#6a6a6a" />
<line x1="53.5" y1="305" x2="53.5" y2="351" stroke="#1e7a45" stroke-width="1.6" />
<line x1="11" y1="351" x2="53.5" y2="351" stroke="#4a4a4a" stroke-width="1.2" />
<line x1="11" y1="391.5" x2="53.5" y2="391.5" stroke="#4a4a4a" stroke-width="1.2" />
<line x1="11" y1="432" x2="53.5" y2="432" stroke="#4a4a4a" stroke-width="1.2" />
<line x1="11" y1="460" x2="53.5" y2="460" stroke="#4a4a4a" stroke-width="1.2" />
<line x1="11" y1="462" x2="53.5" y2="462" stroke="#4a4a4a" stroke-width="1.2" />
<line x1="11" y1="496.3" x2="53.5" y2="496.3" stroke="#4a4a4a" stroke-width="1.2" />
<line x1="11" y1="534.7" x2="53.5" y2="534.7" stroke="#4a4a4a" stroke-width="1.2" />
<line x1="11" y1="572.5" x2="53.5" y2="572.5" stroke="#4a4a4a" stroke-width="1.2" />
<line x1="11" y1="611.3" x2="53.5" y2="611.3" stroke="#4a4a4a" stroke-width="1.2" />
<line x1="11" y1="650.4" x2="53.5" y2="650.4" stroke="#4a4a4a" stroke-width="1.2" />
<line x1="11" y1="689.4" x2="53.5" y2="689.4" stroke="#4a4a4a" stroke-width="1.2" />
<line x1="11" y1="728.5" x2="53.5" y2="728.5" stroke="#4a4a4a" stroke-width="1.2" />
<line x1="11" y1="767.6" x2="53.5" y2="767.6" stroke="#4a4a4a" stroke-width="1.2" />
<line x1="11" y1="805.6" x2="53.5" y2="805.6" stroke="#4a4a4a" stroke-width="1.2" />
<line x1="11" y1="843.5" x2="53.5" y2="843.5" stroke="#4a4a4a" stroke-width="1.2" />
<line x1="11" y1="881.5" x2="53.5" y2="881.5" stroke="#4a4a4a" stroke-width="1.2" />
<line x1="11" y1="919.4" x2="53.5" y2="919.4" stroke="#4a4a4a" stroke-width="1.2" />
<line x1="11" y1="957.5" x2="53.5" y2="957.5" stroke="#4a4a4a" stroke-width="1.2" />
<line x1="11" y1="995.6" x2="53.5" y2="995.6" stroke="#4a4a4a" stroke-width="1.2" />
<line x1="11" y1="1034.6" x2="53.5" y2="1034.6" stroke="#4a4a4a" stroke-width="1.2" />
<line x1="11" y1="1062.6" x2="53.5" y2="1062.6" stroke="#4a4a4a" stroke-width="1.2" />
<line x1="11" y1="1090.6" x2="53.5" y2="1090.6" stroke="#4a4a4a" stroke-width="1.2" />
<line x1="11" y1="1118.4" x2="53.5" y2="1118.4" stroke="#4a4a4a" stroke-width="1.2" />
<line x1="11" y1="1146.3" x2="53.5" y2="1146.3" stroke="#4a4a4a" stroke-width="1.2" />
<line x1="11" y1="1178.8" x2="53.5" y2="1178.8" stroke="#4a4a4a" stroke-width="1.2" />
<line x1="11" y1="1206.6" x2="53.5" y2="1206.6" stroke="#4a4a4a" stroke-width="1.2" />
<line x1="11" y1="1234.6" x2="53.5" y2="1234.6" stroke="#4a4a4a" stroke-width="1.2" />
<line x1="11" y1="1262.5" x2="53.5" y2="1262.5" stroke="#4a4a4a" stroke-width="1.2" />
<line x1="11" y1="1290.4" x2="53.5" y2="1290.4" stroke="#4a4a4a" stroke-width="1.2" />
<line x1="11" y1="1318.3" x2="53.5" y2="1318.3" stroke="#4a4a4a" stroke-width="1.2" />
<line x1="11" y1="1346.3" x2="53.5" y2="1346.3" stroke="#4a4a4a" stroke-width="1.2" />
<line x1="11" y1="1374.4" x2="53.5" y2="1374.4" stroke="#4a4a4a" stroke-width="1.2" />
<line x1="11" y1="1402.4" x2="53.5" y2="1402.4" stroke="#4a4a4a" stroke-width="1.2" />
<line x1="11" y1="1430.3" x2="53.5" y2="1430.3" stroke="#4a4a4a" stroke-width="1.2" />
<line x1="11" y1="1458.3" x2="53.5" y2="1458.3" stroke="#4a4a4a" stroke-width="1.2" />
<line x1="11" y1="1486.3" x2="53.5" y2="1486.3" stroke="#4a4a4a" stroke-width="1.2" />
<line x1="11" y1="1514.3" x2="53.5" y2="1514.3" stroke="#4a4a4a" stroke-width="1.2" />
<line x1="11" y1="1553.4" x2="53.5" y2="1553.4" stroke="#4a4a4a" stroke-width="1.2" />
<line x1="11" y1="1581.5" x2="53.5" y2="1581.5" stroke="#4a4a4a" stroke-width="1.2" />
<line x1="11" y1="1609.4" x2="53.5" y2="1609.4" stroke="#4a4a4a" stroke-width="1.2" />
<line x1="11" y1="1637.5" x2="53.5" y2="1637.5" stroke="#4a4a4a" stroke-width="1.2" />
<line x1="11" y1="1665.5" x2="53.5" y2="1665.5" stroke="#4a4a4a" stroke-width="1.2" />
</g>
<g id="sheet" >
<rect x="54" y="305.5" width="2806.5" height="1364.5" fill="#fff" />
<clipPath id="shc"><rect x="54" y="305.5" width="2806.5" height="1364.5"/></clipPath>
<g clip-path="url(#shc)">
<line x1="54" y1="461.5" x2="2860" y2="461.5" stroke="#9a9a9a" stroke-width="1" />
<text x="90" y="342.8" font-size="38.4" fill="#222" class="sh" font-weight="bold" textLength="324" lengthAdjust="spacingAndGlyphs" >Benchmark KPIs</text>
<text x="87.7" y="383.8" font-size="33" fill="#000" class="sh" font-weight="bold" textLength="314.3" lengthAdjust="spacingAndGlyphs" >ABC Company Inc.</text>
<text x="86" y="419.3" font-size="21" fill="#2079f5" class="sh" font-weight="bold" textLength="258" lengthAdjust="spacingAndGlyphs" >Go to Table of Contents</text>
<line x1="86" y1="422.6" x2="344" y2="422.6" stroke="#2079f5" stroke-width="1.8" />
<rect x="81" y="461.4" width="1385.5" height="35.5" fill="#4b4fcf" />
<text x="657.25" y="488.5" font-size="26" fill="#fff" class="sh" font-weight="bold" textLength="233" lengthAdjust="spacingAndGlyphs" >Benchmark KPIs</text>
<rect x="1504" y="461.4" width="1314.5" height="35.5" fill="#4b4fcf" />
<text x="2044.75" y="488.5" font-size="26" fill="#fff" class="sh" font-weight="bold" textLength="233" lengthAdjust="spacingAndGlyphs" >Gross Margin, %</text>
<rect x="81" y="995.1" width="1385.5" height="39.8" fill="#4b4fcf" />
<text x="607.25" y="1025.1" font-size="26" fill="#fff" class="sh" font-weight="bold" textLength="333" lengthAdjust="spacingAndGlyphs" >Contribution Margin, %</text>
<rect x="1504" y="995.1" width="1314.5" height="39.8" fill="#4b4fcf" />
<text x="2082.25" y="1025.1" font-size="26" fill="#fff" class="sh" font-weight="bold" textLength="158" lengthAdjust="spacingAndGlyphs" >EBITDA, %</text>
<rect x="81" y="1513.9" width="1385.5" height="39.9" fill="#4b4fcf" />
<text x="715.25" y="1544" font-size="26" fill="#fff" class="sh" font-weight="bold" textLength="117" lengthAdjust="spacingAndGlyphs" >EBIT, %</text>
<rect x="1504" y="1513.9" width="1314.5" height="39.9" fill="#4b4fcf" />
<text x="1999.25" y="1544" font-size="26" fill="#fff" class="sh" font-weight="bold" textLength="324" lengthAdjust="spacingAndGlyphs" >Net Profit After Tax, %</text>
<rect x="621" y="535.3" width="845" height="37" fill="#6b72e8" />
<rect x="621" y="572.3" width="185.5" height="195.3" fill="#fff064" />
<text x="713.75" y="561.6" font-size="21" fill="#fff" class="sh" font-weight="bold" text-anchor="middle" textLength="94.7" lengthAdjust="spacingAndGlyphs" >Industry</text>
<text x="872.4" y="561.6" font-size="21" fill="#fff" class="sh" font-weight="bold" text-anchor="middle" textLength="54" lengthAdjust="spacingAndGlyphs" >2026</text>
<line x1="806.5" y1="535.3" x2="806.5" y2="572.3" stroke="#fff" stroke-width="1.3" />
<text x="1004.3" y="561.6" font-size="21" fill="#fff" class="sh" font-weight="bold" text-anchor="middle" textLength="54" lengthAdjust="spacingAndGlyphs" >2027</text>
<line x1="938.3" y1="535.3" x2="938.3" y2="572.3" stroke="#fff" stroke-width="1.3" />
<text x="1136.15" y="561.6" font-size="21" fill="#fff" class="sh" font-weight="bold" text-anchor="middle" textLength="54" lengthAdjust="spacingAndGlyphs" >2028</text>
<line x1="1070.3" y1="535.3" x2="1070.3" y2="572.3" stroke="#fff" stroke-width="1.3" />
<text x="1268" y="561.6" font-size="21" fill="#fff" class="sh" font-weight="bold" text-anchor="middle" textLength="54" lengthAdjust="spacingAndGlyphs" >2029</text>
<line x1="1202" y1="535.3" x2="1202" y2="572.3" stroke="#fff" stroke-width="1.3" />
<text x="1400" y="561.6" font-size="21" fill="#fff" class="sh" font-weight="bold" text-anchor="middle" textLength="54" lengthAdjust="spacingAndGlyphs" >2030</text>
<line x1="1334" y1="535.3" x2="1334" y2="572.3" stroke="#fff" stroke-width="1.3" />
<line x1="621" y1="572.3" x2="1466" y2="572.3" stroke="#fff" stroke-width="1" />
<line x1="621" y1="611.5" x2="806.5" y2="611.5" stroke="#e3dc96" stroke-width="1" />
<line x1="806.5" y1="611.5" x2="1466.5" y2="611.5" stroke="#d6d6e2" stroke-width="1" />
<line x1="621" y1="650.5" x2="806.5" y2="650.5" stroke="#e3dc96" stroke-width="1" />
<line x1="806.5" y1="650.5" x2="1466.5" y2="650.5" stroke="#d6d6e2" stroke-width="1" />
<line x1="621" y1="689.5" x2="806.5" y2="689.5" stroke="#e3dc96" stroke-width="1" />
<line x1="806.5" y1="689.5" x2="1466.5" y2="689.5" stroke="#d6d6e2" stroke-width="1" />
<line x1="621" y1="728.5" x2="806.5" y2="728.5" stroke="#e3dc96" stroke-width="1" />
<line x1="806.5" y1="728.5" x2="1466.5" y2="728.5" stroke="#d6d6e2" stroke-width="1" />
<line x1="621" y1="767.5" x2="806.5" y2="767.5" stroke="#e3dc96" stroke-width="1" />
<line x1="806.5" y1="767.5" x2="1466.5" y2="767.5" stroke="#d6d6e2" stroke-width="1" />
<line x1="806.5" y1="572.8" x2="806.5" y2="767.6" stroke="#d6d6e2" stroke-width="1" />
<line x1="938.3" y1="572.8" x2="938.3" y2="767.6" stroke="#d6d6e2" stroke-width="1" />
<line x1="1070.3" y1="572.8" x2="1070.3" y2="767.6" stroke="#d6d6e2" stroke-width="1" />
<line x1="1202" y1="572.8" x2="1202" y2="767.6" stroke="#d6d6e2" stroke-width="1" />
<line x1="1334" y1="572.8" x2="1334" y2="767.6" stroke="#d6d6e2" stroke-width="1" />
<line x1="1466" y1="572.8" x2="1466" y2="767.6" stroke="#d6d6e2" stroke-width="1" />
<line x1="621" y1="572.3" x2="621" y2="767.6" stroke="#e6dc86" stroke-width="1" />
<text x="86.7" y="600" font-size="21" fill="#1c1c1c" class="sh" font-weight="bold" textLength="184.5" lengthAdjust="spacingAndGlyphs" >Gross margin, %</text>
<text x="713.75" y="599.5" font-size="21" fill="#1a1a1a" class="sh" text-anchor="middle" textLength="63.5" lengthAdjust="spacingAndGlyphs" >40.0%</text>
<text x="872.4" y="599.5" font-size="21" fill="#1a1a1a" class="sh" text-anchor="middle" textLength="63.5" lengthAdjust="spacingAndGlyphs" >88.0%</text>
<text x="1004.3" y="599.5" font-size="21" fill="#1a1a1a" class="sh" text-anchor="middle" textLength="63.5" lengthAdjust="spacingAndGlyphs" >88.7%</text>
<text x="1136.15" y="599.5" font-size="21" fill="#1a1a1a" class="sh" text-anchor="middle" textLength="63.5" lengthAdjust="spacingAndGlyphs" >89.4%</text>
<text x="1268" y="599.5" font-size="21" fill="#1a1a1a" class="sh" text-anchor="middle" textLength="63.5" lengthAdjust="spacingAndGlyphs" >90.1%</text>
<text x="1400" y="599.5" font-size="21" fill="#1a1a1a" class="sh" text-anchor="middle" textLength="63.5" lengthAdjust="spacingAndGlyphs" >90.8%</text>
<text x="86.7" y="638.8" font-size="21" fill="#1c1c1c" class="sh" font-weight="bold" textLength="263" lengthAdjust="spacingAndGlyphs" >Contribution margin, %</text>
<text x="713.75" y="638.3" font-size="21" fill="#1a1a1a" class="sh" text-anchor="middle" textLength="63.5" lengthAdjust="spacingAndGlyphs" >30.0%</text>
<text x="872.4" y="638.3" font-size="21" fill="#1a1a1a" class="sh" text-anchor="middle" textLength="63.5" lengthAdjust="spacingAndGlyphs" >81.5%</text>
<text x="1004.3" y="638.3" font-size="21" fill="#1a1a1a" class="sh" text-anchor="middle" textLength="63.5" lengthAdjust="spacingAndGlyphs" >82.8%</text>
<text x="1136.15" y="638.3" font-size="21" fill="#1a1a1a" class="sh" text-anchor="middle" textLength="63.5" lengthAdjust="spacingAndGlyphs" >84.1%</text>
<text x="1268" y="638.3" font-size="21" fill="#1a1a1a" class="sh" text-anchor="middle" textLength="63.5" lengthAdjust="spacingAndGlyphs" >85.4%</text>
<text x="1400" y="638.3" font-size="21" fill="#1a1a1a" class="sh" text-anchor="middle" textLength="63.5" lengthAdjust="spacingAndGlyphs" >86.7%</text>
<text x="86.7" y="678" font-size="21" fill="#1c1c1c" class="sh" font-weight="bold" textLength="122" lengthAdjust="spacingAndGlyphs" >EBITDA, %</text>
<text x="713.75" y="677.5" font-size="21" fill="#1a1a1a" class="sh" text-anchor="middle" textLength="63.5" lengthAdjust="spacingAndGlyphs" >20.0%</text>
<text x="872.4" y="677.5" font-size="21" fill="#1a1a1a" class="sh" text-anchor="middle" textLength="50.7" lengthAdjust="spacingAndGlyphs" >0.0%</text>
<text x="1004.3" y="677.5" font-size="21" fill="#1a1a1a" class="sh" text-anchor="middle" textLength="50.7" lengthAdjust="spacingAndGlyphs" >0.0%</text>
<text x="1136.15" y="677.5" font-size="21" fill="#1a1a1a" class="sh" text-anchor="middle" textLength="50.7" lengthAdjust="spacingAndGlyphs" >0.0%</text>
<text x="1268" y="677.5" font-size="21" fill="#1a1a1a" class="sh" text-anchor="middle" textLength="63.5" lengthAdjust="spacingAndGlyphs" >31.6%</text>
<text x="1400" y="677.5" font-size="21" fill="#1a1a1a" class="sh" text-anchor="middle" textLength="63.5" lengthAdjust="spacingAndGlyphs" >54.5%</text>
<text x="86.7" y="717" font-size="21" fill="#1c1c1c" class="sh" font-weight="bold" textLength="90" lengthAdjust="spacingAndGlyphs" >EBIT, %</text>
<text x="713.75" y="716.5" font-size="21" fill="#1a1a1a" class="sh" text-anchor="middle" textLength="63.5" lengthAdjust="spacingAndGlyphs" >15.0%</text>
<text x="872.4" y="716.5" font-size="21" fill="#1a1a1a" class="sh" text-anchor="middle" textLength="50.7" lengthAdjust="spacingAndGlyphs" >0.0%</text>
<text x="1004.3" y="716.5" font-size="21" fill="#1a1a1a" class="sh" text-anchor="middle" textLength="50.7" lengthAdjust="spacingAndGlyphs" >0.0%</text>
<text x="1136.15" y="716.5" font-size="21" fill="#1a1a1a" class="sh" text-anchor="middle" textLength="50.7" lengthAdjust="spacingAndGlyphs" >0.0%</text>
<text x="1268" y="716.5" font-size="21" fill="#1a1a1a" class="sh" text-anchor="middle" textLength="63.5" lengthAdjust="spacingAndGlyphs" >30.0%</text>
<text x="1400" y="716.5" font-size="21" fill="#1a1a1a" class="sh" text-anchor="middle" textLength="63.5" lengthAdjust="spacingAndGlyphs" >53.6%</text>
<text x="86.7" y="756.3" font-size="21" fill="#1c1c1c" class="sh" font-weight="bold" textLength="250" lengthAdjust="spacingAndGlyphs" >Net Profit After Tax, %</text>
<text x="713.75" y="755.8" font-size="21" fill="#1a1a1a" class="sh" text-anchor="middle" textLength="63.5" lengthAdjust="spacingAndGlyphs" >10.0%</text>
<text x="872.4" y="755.8" font-size="21" fill="#1a1a1a" class="sh" text-anchor="middle" textLength="50.7" lengthAdjust="spacingAndGlyphs" >0.0%</text>
<text x="1004.3" y="755.8" font-size="21" fill="#1a1a1a" class="sh" text-anchor="middle" textLength="50.7" lengthAdjust="spacingAndGlyphs" >0.0%</text>
<text x="1136.15" y="755.8" font-size="21" fill="#1a1a1a" class="sh" text-anchor="middle" textLength="50.7" lengthAdjust="spacingAndGlyphs" >0.0%</text>
<text x="1268" y="755.8" font-size="21" fill="#1a1a1a" class="sh" text-anchor="middle" textLength="63.5" lengthAdjust="spacingAndGlyphs" >21.1%</text>
<text x="1400" y="755.8" font-size="21" fill="#1a1a1a" class="sh" text-anchor="middle" textLength="63.5" lengthAdjust="spacingAndGlyphs" >39.7%</text>
<line x1="1744.5" y1="527" x2="1814.5" y2="527" stroke="#4ab3e8" stroke-width="6.2" stroke-linecap="round"/>
<circle cx="1779.5" cy="527" r="6.5" fill="#4ab3e8" />
<text x="1823" y="534.6" font-size="21" fill="#000" class="sh" font-weight="bold" textLength="188" lengthAdjust="spacingAndGlyphs" >Gross margin, %</text>
<line x1="2220.4" y1="527" x2="2238.9" y2="527" stroke="#ed7d31" stroke-width="6.2" stroke-linecap="round"/>
<line x1="2264.1" y1="527" x2="2282.6" y2="527" stroke="#ed7d31" stroke-width="6.2" stroke-linecap="round"/>
<circle cx="2251.5" cy="527" r="6.5" fill="#ed7d31" />
<text x="2298.5" y="534.6" font-size="21" fill="#000" class="sh" font-weight="bold" textLength="292.5" lengthAdjust="spacingAndGlyphs" >Industry Gross margin, %</text>
<path d="M1732.5 934.1 L1732.5 624.276 L1973.5 621.81 L2214.5 619.344 L2455.5 616.878 L2696.5 614.412 L2696.5 934.1 Z" fill="#a3d9f5" />
<line x1="1612" y1="581.5" x2="2817.5" y2="581.5" stroke="#5fa8d3" stroke-width="1" />
<text x="1589.6" y="588.9" font-size="21" fill="#000" class="sh" font-weight="bold" text-anchor="end" textLength="67" lengthAdjust="spacingAndGlyphs" >100%</text>
<line x1="1612" y1="617.5" x2="2817.5" y2="617.5" stroke="#5fa8d3" stroke-width="1" />
<text x="1589.6" y="624.13" font-size="21" fill="#000" class="sh" font-weight="bold" text-anchor="end" textLength="54" lengthAdjust="spacingAndGlyphs" >90%</text>
<line x1="1612" y1="652.5" x2="2817.5" y2="652.5" stroke="#5fa8d3" stroke-width="1" />
<text x="1589.6" y="659.36" font-size="21" fill="#000" class="sh" font-weight="bold" text-anchor="end" textLength="54" lengthAdjust="spacingAndGlyphs" >80%</text>
<line x1="1612" y1="687.5" x2="2817.5" y2="687.5" stroke="#5fa8d3" stroke-width="1" />
<text x="1589.6" y="694.59" font-size="21" fill="#000" class="sh" font-weight="bold" text-anchor="end" textLength="54" lengthAdjust="spacingAndGlyphs" >70%</text>
<line x1="1612" y1="722.5" x2="2817.5" y2="722.5" stroke="#5fa8d3" stroke-width="1" />
<text x="1589.6" y="729.82" font-size="21" fill="#000" class="sh" font-weight="bold" text-anchor="end" textLength="54" lengthAdjust="spacingAndGlyphs" >60%</text>
<line x1="1612" y1="757.5" x2="2817.5" y2="757.5" stroke="#5fa8d3" stroke-width="1" />
<text x="1589.6" y="765.05" font-size="21" fill="#000" class="sh" font-weight="bold" text-anchor="end" textLength="54" lengthAdjust="spacingAndGlyphs" >50%</text>
<line x1="1612" y1="793.5" x2="2817.5" y2="793.5" stroke="#5fa8d3" stroke-width="1" />
<text x="1589.6" y="800.28" font-size="21" fill="#000" class="sh" font-weight="bold" text-anchor="end" textLength="54" lengthAdjust="spacingAndGlyphs" >40%</text>
<line x1="1612" y1="828.5" x2="2817.5" y2="828.5" stroke="#5fa8d3" stroke-width="1" />
<text x="1589.6" y="835.51" font-size="21" fill="#000" class="sh" font-weight="bold" text-anchor="end" textLength="54" lengthAdjust="spacingAndGlyphs" >30%</text>
<line x1="1612" y1="863.5" x2="2817.5" y2="863.5" stroke="#5fa8d3" stroke-width="1" />
<text x="1589.6" y="870.74" font-size="21" fill="#000" class="sh" font-weight="bold" text-anchor="end" textLength="54" lengthAdjust="spacingAndGlyphs" >20%</text>
<line x1="1612" y1="898.5" x2="2817.5" y2="898.5" stroke="#5fa8d3" stroke-width="1" />
<text x="1589.6" y="905.97" font-size="21" fill="#000" class="sh" font-weight="bold" text-anchor="end" textLength="54" lengthAdjust="spacingAndGlyphs" >10%</text>
<text x="1589.6" y="941.2" font-size="21" fill="#000" class="sh" font-weight="bold" text-anchor="end" textLength="39" lengthAdjust="spacingAndGlyphs" >0%</text>
<path d="M1732.5 624.276 L1973.5 621.81 L2214.5 619.344 L2455.5 616.878 L2696.5 614.412" fill="none" stroke="#4ab3e8" stroke-width="5.9" stroke-linejoin="round" stroke-linecap="round"/>
<circle cx="1732.5" cy="624.276" r="7.8" fill="#4ab3e8" />
<circle cx="1973.5" cy="621.81" r="7.8" fill="#4ab3e8" />
<circle cx="2214.5" cy="619.344" r="7.8" fill="#4ab3e8" />
<circle cx="2455.5" cy="616.878" r="7.8" fill="#4ab3e8" />
<circle cx="2696.5" cy="614.412" r="7.8" fill="#4ab3e8" />
<line x1="1732.5" y1="793.38" x2="2696.5" y2="793.38" stroke="#ed7d31" stroke-width="6.3" stroke-dasharray="18.8 25.2" stroke-linecap="round"/>
<circle cx="1732.5" cy="793.38" r="7.8" fill="#ed7d31" />
<circle cx="1973.5" cy="793.38" r="7.8" fill="#ed7d31" />
<circle cx="2214.5" cy="793.38" r="7.8" fill="#ed7d31" />
<circle cx="2455.5" cy="793.38" r="7.8" fill="#ed7d31" />
<circle cx="2696.5" cy="793.38" r="7.8" fill="#ed7d31" />
<text x="1732.5" y="971" font-size="21" fill="#000" class="sh" font-weight="bold" text-anchor="middle" textLength="55" lengthAdjust="spacingAndGlyphs" >2026</text>
<text x="1973.5" y="971" font-size="21" fill="#000" class="sh" font-weight="bold" text-anchor="middle" textLength="55" lengthAdjust="spacingAndGlyphs" >2027</text>
<text x="2214.5" y="971" font-size="21" fill="#000" class="sh" font-weight="bold" text-anchor="middle" textLength="55" lengthAdjust="spacingAndGlyphs" >2028</text>
<text x="2455.5" y="971" font-size="21" fill="#000" class="sh" font-weight="bold" text-anchor="middle" textLength="55" lengthAdjust="spacingAndGlyphs" >2029</text>
<text x="2696.5" y="971" font-size="21" fill="#000" class="sh" font-weight="bold" text-anchor="middle" textLength="55" lengthAdjust="spacingAndGlyphs" >2030</text>
<line x1="289" y1="1064.7" x2="357" y2="1064.7" stroke="#4ab3e8" stroke-width="6.2" stroke-linecap="round"/>
<circle cx="323" cy="1064.7" r="6.5" fill="#4ab3e8" />
<text x="366.3" y="1072.3" font-size="21" fill="#000" class="sh" font-weight="bold" textLength="266.5" lengthAdjust="spacingAndGlyphs" >Contribution margin, %</text>
<line x1="814.5" y1="1064.7" x2="833" y2="1064.7" stroke="#ed7d31" stroke-width="6.2" stroke-linecap="round"/>
<line x1="858.1" y1="1064.7" x2="876.6" y2="1064.7" stroke="#ed7d31" stroke-width="6.2" stroke-linecap="round"/>
<circle cx="845.55" cy="1064.7" r="6.5" fill="#ed7d31" />
<text x="892.4" y="1072.3" font-size="21" fill="#000" class="sh" font-weight="bold" textLength="370" lengthAdjust="spacingAndGlyphs" >Industry Contribution margin, %</text>
<path d="M319.8 1464.5 L319.8 1181.89 L571.7 1177.38 L823.6 1172.87 L1075.5 1168.36 L1327.4 1163.85 L1327.4 1464.5 Z" fill="#a3d9f5" />
<line x1="193.7" y1="1117.5" x2="1453" y2="1117.5" stroke="#5fa8d3" stroke-width="1" />
<text x="171.3" y="1124.6" font-size="21" fill="#000" class="sh" font-weight="bold" text-anchor="end" textLength="67" lengthAdjust="spacingAndGlyphs" >100%</text>
<line x1="193.7" y1="1152.5" x2="1453" y2="1152.5" stroke="#5fa8d3" stroke-width="1" />
<text x="171.3" y="1159.3" font-size="21" fill="#000" class="sh" font-weight="bold" text-anchor="end" textLength="54" lengthAdjust="spacingAndGlyphs" >90%</text>
<line x1="193.7" y1="1186.5" x2="1453" y2="1186.5" stroke="#5fa8d3" stroke-width="1" />
<text x="171.3" y="1194" font-size="21" fill="#000" class="sh" font-weight="bold" text-anchor="end" textLength="54" lengthAdjust="spacingAndGlyphs" >80%</text>
<line x1="193.7" y1="1221.5" x2="1453" y2="1221.5" stroke="#5fa8d3" stroke-width="1" />
<text x="171.3" y="1228.7" font-size="21" fill="#000" class="sh" font-weight="bold" text-anchor="end" textLength="54" lengthAdjust="spacingAndGlyphs" >70%</text>
<line x1="193.7" y1="1256.5" x2="1453" y2="1256.5" stroke="#5fa8d3" stroke-width="1" />
<text x="171.3" y="1263.4" font-size="21" fill="#000" class="sh" font-weight="bold" text-anchor="end" textLength="54" lengthAdjust="spacingAndGlyphs" >60%</text>
<line x1="193.7" y1="1290.5" x2="1453" y2="1290.5" stroke="#5fa8d3" stroke-width="1" />
<text x="171.3" y="1298.1" font-size="21" fill="#000" class="sh" font-weight="bold" text-anchor="end" textLength="54" lengthAdjust="spacingAndGlyphs" >50%</text>
<line x1="193.7" y1="1325.5" x2="1453" y2="1325.5" stroke="#5fa8d3" stroke-width="1" />
<text x="171.3" y="1332.8" font-size="21" fill="#000" class="sh" font-weight="bold" text-anchor="end" textLength="54" lengthAdjust="spacingAndGlyphs" >40%</text>
<line x1="193.7" y1="1360.5" x2="1453" y2="1360.5" stroke="#5fa8d3" stroke-width="1" />
<text x="171.3" y="1367.5" font-size="21" fill="#000" class="sh" font-weight="bold" text-anchor="end" textLength="54" lengthAdjust="spacingAndGlyphs" >30%</text>
<line x1="193.7" y1="1395.5" x2="1453" y2="1395.5" stroke="#5fa8d3" stroke-width="1" />
<text x="171.3" y="1402.2" font-size="21" fill="#000" class="sh" font-weight="bold" text-anchor="end" textLength="54" lengthAdjust="spacingAndGlyphs" >20%</text>
<line x1="193.7" y1="1429.5" x2="1453" y2="1429.5" stroke="#5fa8d3" stroke-width="1" />
<text x="171.3" y="1436.9" font-size="21" fill="#000" class="sh" font-weight="bold" text-anchor="end" textLength="54" lengthAdjust="spacingAndGlyphs" >10%</text>
<text x="171.3" y="1471.6" font-size="21" fill="#000" class="sh" font-weight="bold" text-anchor="end" textLength="39" lengthAdjust="spacingAndGlyphs" >0%</text>
<path d="M319.8 1181.89 L571.7 1177.38 L823.6 1172.87 L1075.5 1168.36 L1327.4 1163.85" fill="none" stroke="#4ab3e8" stroke-width="5.9" stroke-linejoin="round" stroke-linecap="round"/>
<circle cx="319.8" cy="1181.89" r="7.8" fill="#4ab3e8" />
<circle cx="571.7" cy="1177.38" r="7.8" fill="#4ab3e8" />
<circle cx="823.6" cy="1172.87" r="7.8" fill="#4ab3e8" />
<circle cx="1075.5" cy="1168.36" r="7.8" fill="#4ab3e8" />
<circle cx="1327.4" cy="1163.85" r="7.8" fill="#4ab3e8" />
<line x1="319.8" y1="1360.6" x2="1327.4" y2="1360.6" stroke="#ed7d31" stroke-width="6.3" stroke-dasharray="18.8 25.2" stroke-linecap="round"/>
<circle cx="319.8" cy="1360.6" r="7.8" fill="#ed7d31" />
<circle cx="571.7" cy="1360.6" r="7.8" fill="#ed7d31" />
<circle cx="823.6" cy="1360.6" r="7.8" fill="#ed7d31" />
<circle cx="1075.5" cy="1360.6" r="7.8" fill="#ed7d31" />
<circle cx="1327.4" cy="1360.6" r="7.8" fill="#ed7d31" />
<text x="319.8" y="1501.2" font-size="21" fill="#000" class="sh" font-weight="bold" text-anchor="middle" textLength="55" lengthAdjust="spacingAndGlyphs" >2026</text>
<text x="571.7" y="1501.2" font-size="21" fill="#000" class="sh" font-weight="bold" text-anchor="middle" textLength="55" lengthAdjust="spacingAndGlyphs" >2027</text>
<text x="823.6" y="1501.2" font-size="21" fill="#000" class="sh" font-weight="bold" text-anchor="middle" textLength="55" lengthAdjust="spacingAndGlyphs" >2028</text>
<text x="1075.5" y="1501.2" font-size="21" fill="#000" class="sh" font-weight="bold" text-anchor="middle" textLength="55" lengthAdjust="spacingAndGlyphs" >2029</text>
<text x="1327.4" y="1501.2" font-size="21" fill="#000" class="sh" font-weight="bold" text-anchor="middle" textLength="55" lengthAdjust="spacingAndGlyphs" >2030</text>
<line x1="1789" y1="1064.7" x2="1857.7" y2="1064.7" stroke="#4ab3e8" stroke-width="6.2" stroke-linecap="round"/>
<circle cx="1823.35" cy="1064.7" r="6.5" fill="#4ab3e8" />
<text x="1867" y="1072.3" font-size="21" fill="#000" class="sh" font-weight="bold" textLength="125" lengthAdjust="spacingAndGlyphs" >EBITDA, %</text>
<line x1="2242.6" y1="1064.7" x2="2261.1" y2="1064.7" stroke="#ed7d31" stroke-width="6.2" stroke-linecap="round"/>
<line x1="2285.5" y1="1064.7" x2="2304" y2="1064.7" stroke="#ed7d31" stroke-width="6.2" stroke-linecap="round"/>
<circle cx="2273.3" cy="1064.7" r="6.5" fill="#ed7d31" />
<text x="2321" y="1072.3" font-size="21" fill="#000" class="sh" font-weight="bold" textLength="228" lengthAdjust="spacingAndGlyphs" >Industry EBITDA, %</text>
<path d="M1732.5 1464.2 L1732.5 1464.4 L1973.5 1464.4 L2214.5 1464.4 L2455.5 1281.8 L2696.5 1149.48 L2696.5 1464.2 Z" fill="#a3d9f5" />
<line x1="1612" y1="1117.5" x2="2817.5" y2="1117.5" stroke="#5fa8d3" stroke-width="1" />
<text x="1589.6" y="1124.6" font-size="21" fill="#000" class="sh" font-weight="bold" text-anchor="end" textLength="54" lengthAdjust="spacingAndGlyphs" >60%</text>
<line x1="1612" y1="1175.5" x2="2817.5" y2="1175.5" stroke="#5fa8d3" stroke-width="1" />
<text x="1589.6" y="1182.38" font-size="21" fill="#000" class="sh" font-weight="bold" text-anchor="end" textLength="54" lengthAdjust="spacingAndGlyphs" >50%</text>
<line x1="1612" y1="1233.5" x2="2817.5" y2="1233.5" stroke="#5fa8d3" stroke-width="1" />
<text x="1589.6" y="1240.17" font-size="21" fill="#000" class="sh" font-weight="bold" text-anchor="end" textLength="54" lengthAdjust="spacingAndGlyphs" >40%</text>
<line x1="1612" y1="1290.5" x2="2817.5" y2="1290.5" stroke="#5fa8d3" stroke-width="1" />
<text x="1589.6" y="1297.95" font-size="21" fill="#000" class="sh" font-weight="bold" text-anchor="end" textLength="54" lengthAdjust="spacingAndGlyphs" >30%</text>
<line x1="1612" y1="1348.5" x2="2817.5" y2="1348.5" stroke="#5fa8d3" stroke-width="1" />
<text x="1589.6" y="1355.73" font-size="21" fill="#000" class="sh" font-weight="bold" text-anchor="end" textLength="54" lengthAdjust="spacingAndGlyphs" >20%</text>
<line x1="1612" y1="1406.5" x2="2817.5" y2="1406.5" stroke="#5fa8d3" stroke-width="1" />
<text x="1589.6" y="1413.52" font-size="21" fill="#000" class="sh" font-weight="bold" text-anchor="end" textLength="54" lengthAdjust="spacingAndGlyphs" >10%</text>
<text x="1589.6" y="1471.3" font-size="21" fill="#000" class="sh" font-weight="bold" text-anchor="end" textLength="39" lengthAdjust="spacingAndGlyphs" >0%</text>
<path d="M1732.5 1464.4 L1973.5 1464.4 L2214.5 1464.4 L2455.5 1281.8 L2696.5 1149.48" fill="none" stroke="#4ab3e8" stroke-width="5.9" stroke-linejoin="round" stroke-linecap="round"/>
<circle cx="1732.5" cy="1464.4" r="7.8" fill="#4ab3e8" />
<circle cx="1973.5" cy="1464.4" r="7.8" fill="#4ab3e8" />
<circle cx="2214.5" cy="1464.4" r="7.8" fill="#4ab3e8" />
<circle cx="2455.5" cy="1281.8" r="7.8" fill="#4ab3e8" />
<circle cx="2696.5" cy="1149.48" r="7.8" fill="#4ab3e8" />
<line x1="1732.5" y1="1348.83" x2="2696.5" y2="1348.83" stroke="#ed7d31" stroke-width="6.3" stroke-dasharray="18.8 25.2" stroke-linecap="round"/>
<circle cx="1732.5" cy="1348.83" r="7.8" fill="#ed7d31" />
<circle cx="1973.5" cy="1348.83" r="7.8" fill="#ed7d31" />
<circle cx="2214.5" cy="1348.83" r="7.8" fill="#ed7d31" />
<circle cx="2455.5" cy="1348.83" r="7.8" fill="#ed7d31" />
<circle cx="2696.5" cy="1348.83" r="7.8" fill="#ed7d31" />
<text x="1732.5" y="1501.2" font-size="21" fill="#000" class="sh" font-weight="bold" text-anchor="middle" textLength="55" lengthAdjust="spacingAndGlyphs" >2026</text>
<text x="1973.5" y="1501.2" font-size="21" fill="#000" class="sh" font-weight="bold" text-anchor="middle" textLength="55" lengthAdjust="spacingAndGlyphs" >2027</text>
<text x="2214.5" y="1501.2" font-size="21" fill="#000" class="sh" font-weight="bold" text-anchor="middle" textLength="55" lengthAdjust="spacingAndGlyphs" >2028</text>
<text x="2455.5" y="1501.2" font-size="21" fill="#000" class="sh" font-weight="bold" text-anchor="middle" textLength="55" lengthAdjust="spacingAndGlyphs" >2029</text>
<text x="2696.5" y="1501.2" font-size="21" fill="#000" class="sh" font-weight="bold" text-anchor="middle" textLength="55" lengthAdjust="spacingAndGlyphs" >2030</text>
<line x1="404.8" y1="1583" x2="473" y2="1583" stroke="#4ab3e8" stroke-width="6.2" stroke-linecap="round"/>
<circle cx="438.9" cy="1583" r="6.5" fill="#4ab3e8" />
<text x="482.7" y="1590.6" font-size="21" fill="#000" class="sh" font-weight="bold" textLength="91.3" lengthAdjust="spacingAndGlyphs" >EBIT, %</text>
<line x1="872" y1="1583" x2="890.5" y2="1583" stroke="#ed7d31" stroke-width="6.2" stroke-linecap="round"/>
<line x1="916" y1="1583" x2="934.5" y2="1583" stroke="#ed7d31" stroke-width="6.2" stroke-linecap="round"/>
<circle cx="903.25" cy="1583" r="6.5" fill="#ed7d31" />
<text x="950" y="1590.6" font-size="21" fill="#000" class="sh" font-weight="bold" textLength="196" lengthAdjust="spacingAndGlyphs" >Industry EBIT, %</text>
<path d="M319.8 1983.5 L319.8 1983.7 L571.7 1983.7 L823.6 1983.7 L1075.5 1810.3 L1327.4 1673.89 L1327.4 1983.5 Z" fill="#a3d9f5" />
<line x1="193.7" y1="1636.5" x2="1453" y2="1636.5" stroke="#5fa8d3" stroke-width="1" />
<text x="171.3" y="1643.8" font-size="21" fill="#000" class="sh" font-weight="bold" text-anchor="end" textLength="54" lengthAdjust="spacingAndGlyphs" >60%</text>
<line x1="193.7" y1="1694.5" x2="1453" y2="1694.5" stroke="#5fa8d3" stroke-width="1" />
<text x="171.3" y="1701.6" font-size="21" fill="#000" class="sh" font-weight="bold" text-anchor="end" textLength="54" lengthAdjust="spacingAndGlyphs" >50%</text>
<line x1="193.7" y1="1752.5" x2="1453" y2="1752.5" stroke="#5fa8d3" stroke-width="1" />
<text x="171.3" y="1759.4" font-size="21" fill="#000" class="sh" font-weight="bold" text-anchor="end" textLength="54" lengthAdjust="spacingAndGlyphs" >40%</text>
<line x1="193.7" y1="1810.5" x2="1453" y2="1810.5" stroke="#5fa8d3" stroke-width="1" />
<text x="171.3" y="1817.2" font-size="21" fill="#000" class="sh" font-weight="bold" text-anchor="end" textLength="54" lengthAdjust="spacingAndGlyphs" >30%</text>
<line x1="193.7" y1="1867.5" x2="1453" y2="1867.5" stroke="#5fa8d3" stroke-width="1" />
<text x="171.3" y="1875" font-size="21" fill="#000" class="sh" font-weight="bold" text-anchor="end" textLength="54" lengthAdjust="spacingAndGlyphs" >20%</text>
<line x1="193.7" y1="1925.5" x2="1453" y2="1925.5" stroke="#5fa8d3" stroke-width="1" />
<text x="171.3" y="1932.8" font-size="21" fill="#000" class="sh" font-weight="bold" text-anchor="end" textLength="54" lengthAdjust="spacingAndGlyphs" >10%</text>
<text x="171.3" y="1990.6" font-size="21" fill="#000" class="sh" font-weight="bold" text-anchor="end" textLength="39" lengthAdjust="spacingAndGlyphs" >0%</text>
<path d="M319.8 1983.7 L571.7 1983.7 L823.6 1983.7 L1075.5 1810.3 L1327.4 1673.89" fill="none" stroke="#4ab3e8" stroke-width="5.9" stroke-linejoin="round" stroke-linecap="round"/>
<circle cx="319.8" cy="1983.7" r="7.8" fill="#4ab3e8" />
<circle cx="571.7" cy="1983.7" r="7.8" fill="#4ab3e8" />
<circle cx="823.6" cy="1983.7" r="7.8" fill="#4ab3e8" />
<circle cx="1075.5" cy="1810.3" r="7.8" fill="#4ab3e8" />
<circle cx="1327.4" cy="1673.89" r="7.8" fill="#4ab3e8" />
<line x1="319.8" y1="1897" x2="1327.4" y2="1897" stroke="#ed7d31" stroke-width="6.3" stroke-dasharray="18.8 25.2" stroke-linecap="round"/>
<circle cx="319.8" cy="1897" r="7.8" fill="#ed7d31" />
<circle cx="571.7" cy="1897" r="7.8" fill="#ed7d31" />
<circle cx="823.6" cy="1897" r="7.8" fill="#ed7d31" />
<circle cx="1075.5" cy="1897" r="7.8" fill="#ed7d31" />
<circle cx="1327.4" cy="1897" r="7.8" fill="#ed7d31" />
<line x1="1696" y1="1583" x2="1765" y2="1583" stroke="#4ab3e8" stroke-width="6.2" stroke-linecap="round"/>
<circle cx="1730.5" cy="1583" r="6.5" fill="#4ab3e8" />
<text x="1775" y="1590.6" font-size="21" fill="#000" class="sh" font-weight="bold" textLength="258" lengthAdjust="spacingAndGlyphs" >Net Profit After Tax, %</text>
<line x1="2201" y1="1583" x2="2219.5" y2="1583" stroke="#ed7d31" stroke-width="6.2" stroke-linecap="round"/>
<line x1="2245.5" y1="1583" x2="2264" y2="1583" stroke="#ed7d31" stroke-width="6.2" stroke-linecap="round"/>
<circle cx="2232.5" cy="1583" r="6.5" fill="#ed7d31" />
<text x="2280" y="1590.6" font-size="21" fill="#000" class="sh" font-weight="bold" textLength="361.5" lengthAdjust="spacingAndGlyphs" >Industry Net Profit After Tax, %</text>
<path d="M1732.5 1983.5 L1732.5 1983.7 L1973.5 1983.7 L2214.5 1983.7 L2455.5 1821.23 L2696.5 1678.01 L2696.5 1983.5 Z" fill="#a3d9f5" />
<line x1="1612" y1="1636.5" x2="2817.5" y2="1636.5" stroke="#5fa8d3" stroke-width="1" />
<text x="1589.6" y="1644.1" font-size="21" fill="#000" class="sh" font-weight="bold" text-anchor="end" textLength="54" lengthAdjust="spacingAndGlyphs" >45%</text>
<line x1="1612" y1="1675.5" x2="2817.5" y2="1675.5" stroke="#5fa8d3" stroke-width="1" />
<text x="1589.6" y="1682.6" font-size="21" fill="#000" class="sh" font-weight="bold" text-anchor="end" textLength="54" lengthAdjust="spacingAndGlyphs" >40%</text>
<line x1="1612" y1="1714.5" x2="2817.5" y2="1714.5" stroke="#5fa8d3" stroke-width="1" />
<text x="1589.6" y="1721.1" font-size="21" fill="#000" class="sh" font-weight="bold" text-anchor="end" textLength="54" lengthAdjust="spacingAndGlyphs" >35%</text>
<line x1="1612" y1="1752.5" x2="2817.5" y2="1752.5" stroke="#5fa8d3" stroke-width="1" />
<text x="1589.6" y="1759.6" font-size="21" fill="#000" class="sh" font-weight="bold" text-anchor="end" textLength="54" lengthAdjust="spacingAndGlyphs" >30%</text>
<line x1="1612" y1="1790.5" x2="2817.5" y2="1790.5" stroke="#5fa8d3" stroke-width="1" />
<text x="1589.6" y="1798.1" font-size="21" fill="#000" class="sh" font-weight="bold" text-anchor="end" textLength="54" lengthAdjust="spacingAndGlyphs" >25%</text>
<line x1="1612" y1="1829.5" x2="2817.5" y2="1829.5" stroke="#5fa8d3" stroke-width="1" />
<text x="1589.6" y="1836.6" font-size="21" fill="#000" class="sh" font-weight="bold" text-anchor="end" textLength="54" lengthAdjust="spacingAndGlyphs" >20%</text>
<line x1="1612" y1="1868.5" x2="2817.5" y2="1868.5" stroke="#5fa8d3" stroke-width="1" />
<text x="1589.6" y="1875.1" font-size="21" fill="#000" class="sh" font-weight="bold" text-anchor="end" textLength="54" lengthAdjust="spacingAndGlyphs" >15%</text>
<line x1="1612" y1="1906.5" x2="2817.5" y2="1906.5" stroke="#5fa8d3" stroke-width="1" />
<text x="1589.6" y="1913.6" font-size="21" fill="#000" class="sh" font-weight="bold" text-anchor="end" textLength="54" lengthAdjust="spacingAndGlyphs" >10%</text>
<line x1="1612" y1="1944.5" x2="2817.5" y2="1944.5" stroke="#5fa8d3" stroke-width="1" />
<text x="1589.6" y="1952.1" font-size="21" fill="#000" class="sh" font-weight="bold" text-anchor="end" textLength="39" lengthAdjust="spacingAndGlyphs" >5%</text>
<text x="1589.6" y="1990.6" font-size="21" fill="#000" class="sh" font-weight="bold" text-anchor="end" textLength="39" lengthAdjust="spacingAndGlyphs" >0%</text>
<path d="M1732.5 1983.7 L1973.5 1983.7 L2214.5 1983.7 L2455.5 1821.23 L2696.5 1678.01" fill="none" stroke="#4ab3e8" stroke-width="5.9" stroke-linejoin="round" stroke-linecap="round"/>
<circle cx="1732.5" cy="1983.7" r="7.8" fill="#4ab3e8" />
<circle cx="1973.5" cy="1983.7" r="7.8" fill="#4ab3e8" />
<circle cx="2214.5" cy="1983.7" r="7.8" fill="#4ab3e8" />
<circle cx="2455.5" cy="1821.23" r="7.8" fill="#4ab3e8" />
<circle cx="2696.5" cy="1678.01" r="7.8" fill="#4ab3e8" />
<line x1="1732.5" y1="1906.7" x2="2696.5" y2="1906.7" stroke="#ed7d31" stroke-width="6.3" stroke-dasharray="18.8 25.2" stroke-linecap="round"/>
<circle cx="1732.5" cy="1906.7" r="7.8" fill="#ed7d31" />
<circle cx="1973.5" cy="1906.7" r="7.8" fill="#ed7d31" />
<circle cx="2214.5" cy="1906.7" r="7.8" fill="#ed7d31" />
<circle cx="2455.5" cy="1906.7" r="7.8" fill="#ed7d31" />
<circle cx="2696.5" cy="1906.7" r="7.8" fill="#ed7d31" />
</g>
</g>
<g id="rownums" >
<text x="32" y="344.5" font-size="21" fill="#f0f0f0" text-anchor="middle" textLength="11.5" lengthAdjust="spacingAndGlyphs" >1</text>
<text x="32" y="385" font-size="21" fill="#f0f0f0" text-anchor="middle" textLength="11.5" lengthAdjust="spacingAndGlyphs" >2</text>
<text x="32" y="425.5" font-size="21" fill="#f0f0f0" text-anchor="middle" textLength="11.5" lengthAdjust="spacingAndGlyphs" >3</text>
<text x="32" y="453.5" font-size="21" fill="#f0f0f0" text-anchor="middle" textLength="11.5" lengthAdjust="spacingAndGlyphs" >4</text>
<text x="32" y="489.8" font-size="21" fill="#f0f0f0" text-anchor="middle" textLength="11.5" lengthAdjust="spacingAndGlyphs" >6</text>
<text x="32" y="528.2" font-size="21" fill="#f0f0f0" text-anchor="middle" textLength="11.5" lengthAdjust="spacingAndGlyphs" >7</text>
<text x="32" y="566" font-size="21" fill="#f0f0f0" text-anchor="middle" textLength="11.5" lengthAdjust="spacingAndGlyphs" >8</text>
<text x="32" y="604.8" font-size="21" fill="#f0f0f0" text-anchor="middle" textLength="11.5" lengthAdjust="spacingAndGlyphs" >9</text>
<text x="32" y="643.9" font-size="21" fill="#f0f0f0" text-anchor="middle" textLength="23" lengthAdjust="spacingAndGlyphs" >10</text>
<text x="32" y="682.9" font-size="21" fill="#f0f0f0" text-anchor="middle" textLength="23" lengthAdjust="spacingAndGlyphs" >11</text>
<text x="32" y="722" font-size="21" fill="#f0f0f0" text-anchor="middle" textLength="23" lengthAdjust="spacingAndGlyphs" >12</text>
<text x="32" y="761.1" font-size="21" fill="#f0f0f0" text-anchor="middle" textLength="23" lengthAdjust="spacingAndGlyphs" >13</text>
<text x="32" y="799.1" font-size="21" fill="#f0f0f0" text-anchor="middle" textLength="23" lengthAdjust="spacingAndGlyphs" >14</text>
<text x="32" y="837" font-size="21" fill="#f0f0f0" text-anchor="middle" textLength="23" lengthAdjust="spacingAndGlyphs" >15</text>
<text x="32" y="875" font-size="21" fill="#f0f0f0" text-anchor="middle" textLength="23" lengthAdjust="spacingAndGlyphs" >16</text>
<text x="32" y="912.9" font-size="21" fill="#f0f0f0" text-anchor="middle" textLength="23" lengthAdjust="spacingAndGlyphs" >17</text>
<text x="32" y="951" font-size="21" fill="#f0f0f0" text-anchor="middle" textLength="23" lengthAdjust="spacingAndGlyphs" >18</text>
<text x="32" y="989.1" font-size="21" fill="#f0f0f0" text-anchor="middle" textLength="23" lengthAdjust="spacingAndGlyphs" >19</text>
<text x="32" y="1028.1" font-size="21" fill="#f0f0f0" text-anchor="middle" textLength="23" lengthAdjust="spacingAndGlyphs" >20</text>
<text x="32" y="1056.1" font-size="21" fill="#f0f0f0" text-anchor="middle" textLength="23" lengthAdjust="spacingAndGlyphs" >21</text>
<text x="32" y="1084.1" font-size="21" fill="#f0f0f0" text-anchor="middle" textLength="23" lengthAdjust="spacingAndGlyphs" >22</text>
<text x="32" y="1111.9" font-size="21" fill="#f0f0f0" text-anchor="middle" textLength="23" lengthAdjust="spacingAndGlyphs" >23</text>
<text x="32" y="1139.8" font-size="21" fill="#f0f0f0" text-anchor="middle" textLength="23" lengthAdjust="spacingAndGlyphs" >24</text>
<text x="32" y="1172.3" font-size="21" fill="#f0f0f0" text-anchor="middle" textLength="23" lengthAdjust="spacingAndGlyphs" >25</text>
<text x="32" y="1200.1" font-size="21" fill="#f0f0f0" text-anchor="middle" textLength="23" lengthAdjust="spacingAndGlyphs" >26</text>
<text x="32" y="1228.1" font-size="21" fill="#f0f0f0" text-anchor="middle" textLength="23" lengthAdjust="spacingAndGlyphs" >27</text>
<text x="32" y="1256" font-size="21" fill="#f0f0f0" text-anchor="middle" textLength="23" lengthAdjust="spacingAndGlyphs" >28</text>
<text x="32" y="1283.9" font-size="21" fill="#f0f0f0" text-anchor="middle" textLength="23" lengthAdjust="spacingAndGlyphs" >29</text>
<text x="32" y="1311.8" font-size="21" fill="#f0f0f0" text-anchor="middle" textLength="23" lengthAdjust="spacingAndGlyphs" >30</text>
<text x="32" y="1339.8" font-size="21" fill="#f0f0f0" text-anchor="middle" textLength="23" lengthAdjust="spacingAndGlyphs" >31</text>
<text x="32" y="1367.9" font-size="21" fill="#f0f0f0" text-anchor="middle" textLength="23" lengthAdjust="spacingAndGlyphs" >32</text>
<text x="32" y="1395.9" font-size="21" fill="#f0f0f0" text-anchor="middle" textLength="23" lengthAdjust="spacingAndGlyphs" >33</text>
<text x="32" y="1423.8" font-size="21" fill="#f0f0f0" text-anchor="middle" textLength="23" lengthAdjust="spacingAndGlyphs" >34</text>
<text x="32" y="1451.8" font-size="21" fill="#f0f0f0" text-anchor="middle" textLength="23" lengthAdjust="spacingAndGlyphs" >35</text>
<text x="32" y="1479.8" font-size="21" fill="#f0f0f0" text-anchor="middle" textLength="23" lengthAdjust="spacingAndGlyphs" >36</text>
<text x="32" y="1507.8" font-size="21" fill="#f0f0f0" text-anchor="middle" textLength="23" lengthAdjust="spacingAndGlyphs" >37</text>
<text x="32" y="1546.9" font-size="21" fill="#f0f0f0" text-anchor="middle" textLength="23" lengthAdjust="spacingAndGlyphs" >38</text>
<text x="32" y="1575" font-size="21" fill="#f0f0f0" text-anchor="middle" textLength="23" lengthAdjust="spacingAndGlyphs" >39</text>
<text x="32" y="1602.9" font-size="21" fill="#f0f0f0" text-anchor="middle" textLength="23" lengthAdjust="spacingAndGlyphs" >40</text>
<text x="32" y="1631" font-size="21" fill="#f0f0f0" text-anchor="middle" textLength="23" lengthAdjust="spacingAndGlyphs" >41</text>
<text x="32" y="1659" font-size="21" fill="#f0f0f0" text-anchor="middle" textLength="23" lengthAdjust="spacingAndGlyphs" >42</text>
</g>
<g id="vscroll" >
<rect x="2862.5" y="279" width="26.5" height="1389" fill="#171717" rx="13" />
<path d="M2876 286.5 l6.5 9 h-13 z" fill="#9a9a9a" stroke="#9a9a9a" stroke-width="1.5" stroke-linejoin="round"/>
<rect x="2870.3" y="304" width="11.7" height="911.5" fill="#9b9b9b" rx="5.8" />
<path d="M2876 1663.5 l6.5 -9 h-13 z" fill="#9a9a9a" stroke="#9a9a9a" stroke-width="1.5" stroke-linejoin="round"/>
</g>
<g id="tabs" >
<rect x="1957" y="1669.5" width="80" height="8" fill="#fff" />
<path d="M11 1670 H1959 a6 6 0 0 1 6 6 V1718 H11 Z" fill="#0a0a0a" />
<path d="M2029.5 1718 V1676 a6 6 0 0 1 6 -6 H2891 V1718 Z" fill="#0a0a0a" />
<rect x="1965" y="1670" width="64.5" height="48" fill="#0a0a0a" />
<path d="M54 1685 l-7 8 l7 8" fill="none" stroke="#8a8a8a" stroke-width="1.6" stroke-linecap="round" stroke-linejoin="round"/>
<path d="M95.5 1685 l7 8 l-7 8" fill="none" stroke="#e0e0e0" stroke-width="1.6" stroke-linecap="round" stroke-linejoin="round"/>
<text x="190" y="1703" font-size="22" fill="#fff" textLength="82" lengthAdjust="spacingAndGlyphs" >Contents</text>
<line x1="292.5" y1="1679" x2="292.5" y2="1707" stroke="#4a4a4a" stroke-width="1.3" />
<rect x="299" y="1676.5" width="128" height="35.5" fill="#fdee6d" rx="6" />
<text x="313.5" y="1703" font-size="22" fill="#111" textLength="99" lengthAdjust="spacingAndGlyphs" >Dashboard</text>
<line x1="433.5" y1="1679" x2="433.5" y2="1707" stroke="#4a4a4a" stroke-width="1.3" />
<rect x="440" y="1676.5" width="105.7" height="35.5" fill="#fdee6d" rx="6" />
<text x="453.85" y="1703" font-size="22" fill="#111" textLength="78" lengthAdjust="spacingAndGlyphs" >Revenue</text>
<line x1="552.5" y1="1679" x2="552.5" y2="1707" stroke="#4a4a4a" stroke-width="1.3" />
<rect x="559" y="1676.5" width="158" height="35.5" fill="#fdee6d" rx="6" />
<text x="571.65" y="1703" font-size="22" fill="#111" textLength="132.7" lengthAdjust="spacingAndGlyphs" >COGS &amp; OPEX</text>
<line x1="723.5" y1="1679" x2="723.5" y2="1707" stroke="#4a4a4a" stroke-width="1.3" />
<rect x="730" y="1676.5" width="89" height="35.5" fill="#fdee6d" rx="6" />
<text x="743.5" y="1703" font-size="22" fill="#111" textLength="62" lengthAdjust="spacingAndGlyphs" >Payroll</text>
<line x1="825.5" y1="1679" x2="825.5" y2="1707" stroke="#4a4a4a" stroke-width="1.3" />
<rect x="832" y="1676.5" width="87" height="35.5" fill="#fdee6d" rx="6" />
<text x="845" y="1703" font-size="22" fill="#111" textLength="61" lengthAdjust="spacingAndGlyphs" >CAPEX</text>
<line x1="925.5" y1="1679" x2="925.5" y2="1707" stroke="#4a4a4a" stroke-width="1.3" />
<rect x="932" y="1676.5" width="113" height="35.5" fill="#fdee6d" rx="6" />
<text x="945.5" y="1703" font-size="22" fill="#111" textLength="86" lengthAdjust="spacingAndGlyphs" >CapTable</text>
<line x1="1051.5" y1="1679" x2="1051.5" y2="1707" stroke="#4a4a4a" stroke-width="1.3" />
<rect x="1058" y="1676.5" width="90" height="35.5" fill="#fdee6d" rx="6" />
<text x="1071" y="1703" font-size="22" fill="#111" textLength="64" lengthAdjust="spacingAndGlyphs" >Capital</text>
<line x1="1154.5" y1="1679" x2="1154.5" y2="1707" stroke="#4a4a4a" stroke-width="1.3" />
<rect x="1161" y="1676.5" width="42" height="35.5" fill="#4db2ec" rx="6" />
<text x="1174.25" y="1703" font-size="22" fill="#111" textLength="15.5" lengthAdjust="spacingAndGlyphs" >IS</text>
<line x1="1209.5" y1="1679" x2="1209.5" y2="1707" stroke="#4a4a4a" stroke-width="1.3" />
<rect x="1216" y="1676.5" width="48" height="35.5" fill="#4db2ec" rx="6" />
<text x="1228.5" y="1703" font-size="22" fill="#111" textLength="23" lengthAdjust="spacingAndGlyphs" >CF</text>
<line x1="1270.5" y1="1679" x2="1270.5" y2="1707" stroke="#4a4a4a" stroke-width="1.3" />
<rect x="1277" y="1676.5" width="48" height="35.5" fill="#4db2ec" rx="6" />
<text x="1289.5" y="1703" font-size="22" fill="#111" textLength="23" lengthAdjust="spacingAndGlyphs" >BS</text>
<line x1="1331.5" y1="1679" x2="1331.5" y2="1707" stroke="#4a4a4a" stroke-width="1.3" />
<rect x="1338" y="1676.5" width="114.5" height="35.5" fill="#4db2ec" rx="6" />
<text x="1351.5" y="1703" font-size="22" fill="#111" textLength="87.5" lengthAdjust="spacingAndGlyphs" >Scenarios</text>
<line x1="1459" y1="1679" x2="1459" y2="1707" stroke="#4a4a4a" stroke-width="1.3" />
<rect x="1465.5" y="1676.5" width="115.5" height="35.5" fill="#4db2ec" rx="6" />
<text x="1479.5" y="1703" font-size="22" fill="#111" textLength="87.5" lengthAdjust="spacingAndGlyphs" >Valuation</text>
<line x1="1586.5" y1="1679" x2="1586.5" y2="1707" stroke="#4a4a4a" stroke-width="1.3" />
<rect x="1593" y="1676.5" width="115" height="35.5" fill="#4db2ec" rx="6" />
<text x="1607" y="1703" font-size="22" fill="#111" textLength="87" lengthAdjust="spacingAndGlyphs" >Summary</text>
<line x1="1714.5" y1="1679" x2="1714.5" y2="1707" stroke="#4a4a4a" stroke-width="1.3" />
<rect x="1721" y="1676.5" width="48" height="35.5" fill="#4db2ec" rx="6" />
<text x="1733.25" y="1703" font-size="22" fill="#111" textLength="23.5" lengthAdjust="spacingAndGlyphs" >BE</text>
<line x1="1775.5" y1="1679" x2="1775.5" y2="1707" stroke="#4a4a4a" stroke-width="1.3" />
<rect x="1782" y="1676.5" width="72" height="35.5" fill="#4db2ec" rx="6" />
<text x="1794.75" y="1703" font-size="22" fill="#111" textLength="46.5" lengthAdjust="spacingAndGlyphs" >ROIC</text>
<line x1="1860.5" y1="1679" x2="1860.5" y2="1707" stroke="#4a4a4a" stroke-width="1.3" />
<rect x="1867" y="1676.5" width="85" height="35.5" fill="#4db2ec" rx="6" />
<text x="1880.25" y="1703" font-size="22" fill="#111" textLength="58.5" lengthAdjust="spacingAndGlyphs" >Charts</text>
<line x1="1958.5" y1="1679" x2="1958.5" y2="1707" stroke="#4a4a4a" stroke-width="1.3" />
<defs><linearGradient id="kg" x1="0" y1="0" x2="0" y2="1"><stop offset="0.35" stop-color="#fff"/><stop offset="1" stop-color="#c6e3f6"/></linearGradient></defs>
<path d="M1965 1669.5 H2030 V1706 a6 6 0 0 1 -6 6 H1971 a6 6 0 0 1 -6 -6 Z" fill="url(#kg)" />
<text x="1977.5" y="1700" font-size="22" fill="#222" textLength="39.5" lengthAdjust="spacingAndGlyphs" >KPIs</text>
<rect x="1976" y="1704.6" width="40" height="2.8" fill="#1e7a45" rx="1" />
<line x1="2035.5" y1="1679" x2="2035.5" y2="1707" stroke="#4a4a4a" stroke-width="1.3" />
<path d="M2048 1676.5 H2072 V1712 H2048 a6 6 0 0 1 -6 -6 V1682.5 a6 6 0 0 1 6 -6 Z" fill="#4db2ec" />
<clipPath id="scc"><rect x="2042" y="1676" width="30" height="37"/></clipPath>
<text x="2054" y="1703" font-size="22" fill="#111" clip-path="url(#scc)">Scenarios</text>
<circle cx="2087.7" cy="1693" r="2.4" fill="#e6e6e6" />
<circle cx="2095" cy="1693" r="2.4" fill="#e6e6e6" />
<circle cx="2102.3" cy="1693" r="2.4" fill="#e6e6e6" />
<path d="M2135 1693.3 h16.5 M2143.2 1685 v16.5" fill="none" stroke="#e6e6e6" stroke-width="1.7" />
<rect x="2190.3" y="1687.8" width="3.2" height="3.2" fill="#e6e6e6" />
<rect x="2190.3" y="1693.4" width="3.2" height="3.2" fill="#e6e6e6" />
<rect x="2190.3" y="1699" width="3.2" height="3.2" fill="#e6e6e6" />
<rect x="2216" y="1680" width="643" height="27" fill="#171717" rx="13.5" />
<path d="M2224 1693.5 l9 -6.5 v13 z" fill="#9a9a9a" stroke="#9a9a9a" stroke-width="1.5" stroke-linejoin="round"/>
<rect x="2241" y="1687.3" width="415" height="12" fill="#9b9b9b" rx="6" />
<path d="M2852 1693.5 l-9 -6.5 v13 z" fill="#9a9a9a" stroke="#9a9a9a" stroke-width="1.5" stroke-linejoin="round"/>
</g>
<g id="statusbar" >
<rect x="11" y="1718.5" width="2880" height="32.5" fill="#141414" />
<line x1="11" y1="1718.5" x2="2891" y2="1718.5" stroke="#2a2a2a" stroke-width="1" />
<text x="27" y="1740" font-size="15.5" fill="#fff" textLength="42" lengthAdjust="spacingAndGlyphs" >Ready</text>
<path d="M99.8 1743 V1726.8 H120 V1733" fill="none" stroke="#f0f0f0" stroke-width="1.7" />
<path d="M99.8 1743 H108" fill="none" stroke="#f0f0f0" stroke-width="1.7" />
<line x1="99.8" y1="1730" x2="120" y2="1730" stroke="#f0f0f0" stroke-width="1.5" />
<line x1="103" y1="1734.5" x2="108" y2="1734.5" stroke="#f0f0f0" stroke-width="1.5" />
<line x1="103" y1="1738.6" x2="107" y2="1738.6" stroke="#f0f0f0" stroke-width="1.5" />
<circle cx="114" cy="1738.7" r="5.3" fill="#141414" stroke="#f0f0f0" stroke-width="1.7" />
<circle cx="114" cy="1738.7" r="2.5" fill="#f0f0f0" />
<g stroke-linecap="round" stroke-linejoin="round">
<path d="M147 1730 q1.5 2.2 5.6 2.6 v3.6 l-3 7.2 M164.2 1730 q-1.5 2.2 -5.6 2.6 v3 M155.6 1737.5 l1.6 2.6" fill="none" stroke="#fff" stroke-width="3.6" />
<path d="M147 1730 q1.5 2.2 5.6 2.6 v3.6 l-3 7.2 M164.2 1730 q-1.5 2.2 -5.6 2.6 v3 M155.6 1737.5 l1.6 2.6" fill="none" stroke="#141414" stroke-width="1.1" />
<circle cx="155.6" cy="1726.8" r="2.5" fill="#141414" stroke="#fff" stroke-width="1.3" />
<path d="M158.8 1738 l8 7.6 M166.8 1738 l-8 7.6" fill="none" stroke="#fff" stroke-width="1.4" />
</g>
<text x="173" y="1740" font-size="15" fill="#fff" font-weight="bold" textLength="187.8" lengthAdjust="spacingAndGlyphs" >Accessibility: Investigate</text>
<rect x="2445" y="1719" width="60" height="32" fill="#262626" />
<rect x="2464.5" y="1725.5" width="19.5" height="18.5" fill="none" stroke="#fff" stroke-width="1.6" />
<line x1="2471" y1="1725.5" x2="2471" y2="1744" stroke="#fff" stroke-width="1.4" />
<line x1="2477.5" y1="1725.5" x2="2477.5" y2="1744" stroke="#fff" stroke-width="1.4" />
<line x1="2464.5" y1="1731.7" x2="2484" y2="1731.7" stroke="#fff" stroke-width="1.4" />
<line x1="2464.5" y1="1737.9" x2="2484" y2="1737.9" stroke="#fff" stroke-width="1.4" />
<rect x="2524.5" y="1725.5" width="21" height="18.5" fill="none" stroke="#fff" stroke-width="1.6" />
<rect x="2529.5" y="1729.5" width="11" height="10.5" fill="none" stroke="#fff" stroke-width="1.3" />
<line x1="2532" y1="1733" x2="2538" y2="1733" stroke="#fff" stroke-width="1.1" />
<line x1="2532" y1="1736.3" x2="2538" y2="1736.3" stroke="#fff" stroke-width="1.1" />
<rect x="2584.5" y="1725.5" width="21" height="18.5" fill="none" stroke="#fff" stroke-width="1.6" />
<path d="M2590.5 1725.5 v9 M2584.5 1734.5 h12.5 v-9" fill="none" stroke="#fff" stroke-width="1.4" />
<line x1="2633" y1="1734.2" x2="2645" y2="1734.2" stroke="#ddd" stroke-width="1.3" />
<line x1="2653" y1="1734.2" x2="2801" y2="1734.2" stroke="#c8c8c8" stroke-width="1.3" />
<line x1="2727" y1="1730" x2="2727" y2="1738.5" stroke="#c8c8c8" stroke-width="1.4" />
<rect x="2733" y="1726" width="8" height="17" fill="#bdbdbd" />
<path d="M2809 1734.2 h12 M2815 1728.2 v12" fill="none" stroke="#ddd" stroke-width="1.3" />
<text x="2840" y="1739.8" font-size="15.5" fill="#fff" textLength="39" lengthAdjust="spacingAndGlyphs" >140%</text>
</g>
</svg>
</body></html>
